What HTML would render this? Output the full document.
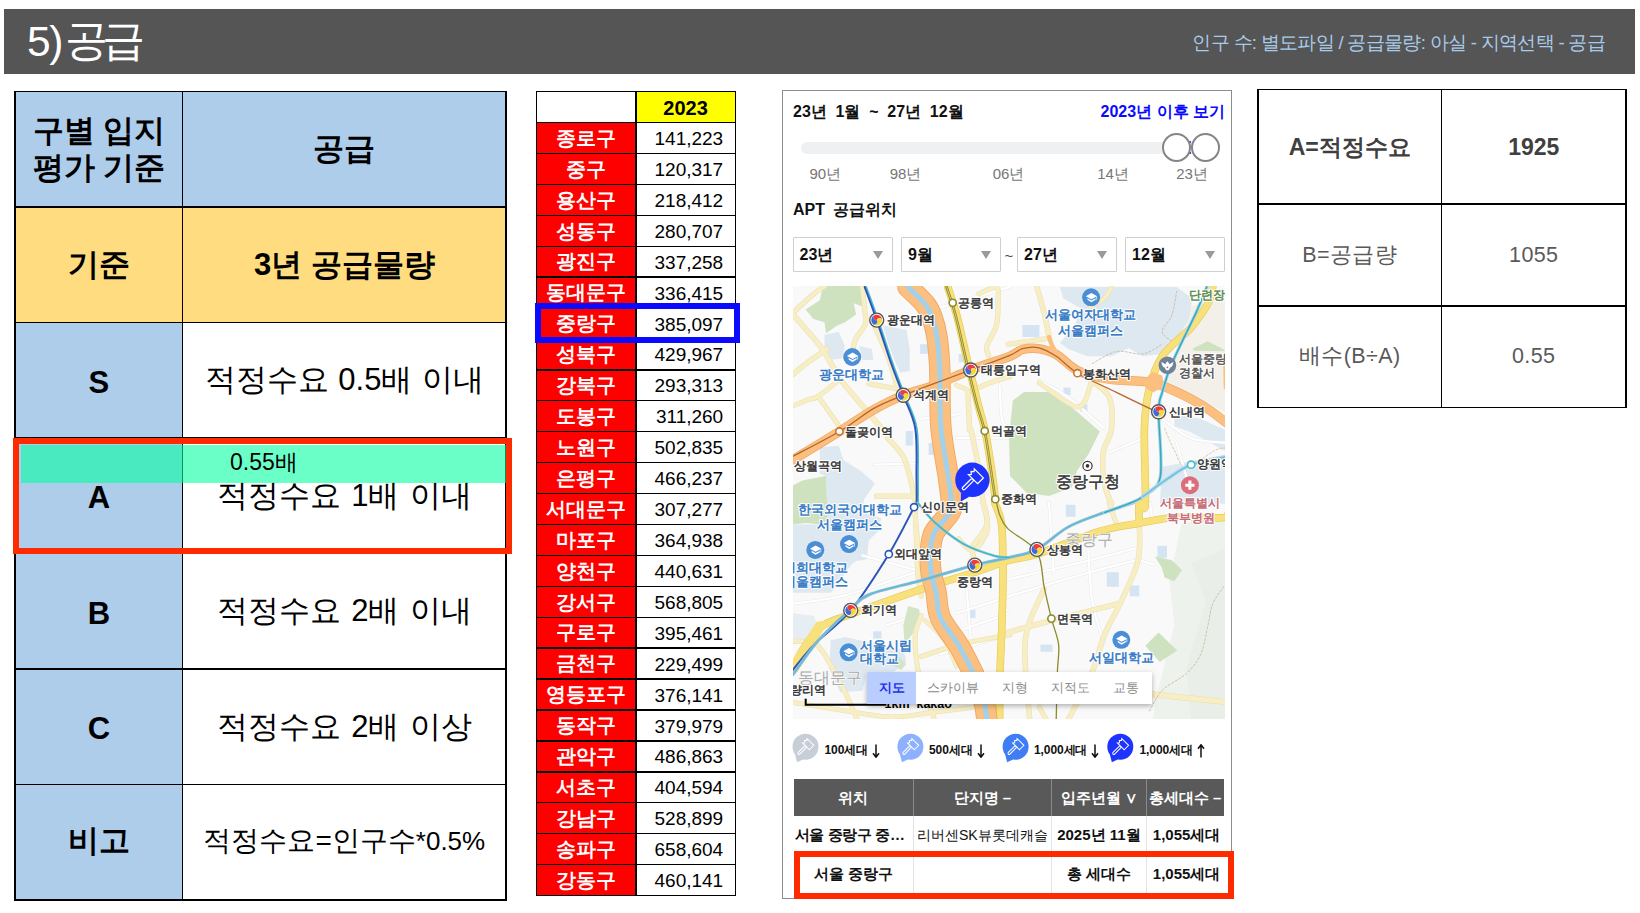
<!DOCTYPE html>
<html lang="ko">
<head>
<meta charset="utf-8">
<title>5) 공급</title>
<style>
html,body{margin:0;padding:0;background:#fff;}
body{width:1640px;height:913px;position:relative;overflow:hidden;font-family:"Liberation Sans",sans-serif;color:#000;}
.abs{position:absolute;}
.c{position:absolute;display:flex;align-items:center;justify-content:center;text-align:center;white-space:nowrap;line-height:1.15;}
.ln{position:absolute;background:#000;}
/* header */
#hdr{left:4px;top:8.5px;width:1631px;height:65.5px;background:#555555;}
#ttl{left:27px;top:8px;height:66px;color:#fff;font-size:41px;justify-content:flex-start;}
#note{right:35px;top:9.5px;height:66px;color:#a9cbea;font-size:18.5px;letter-spacing:-0.68px;justify-content:flex-end;}
/* left table */
.lt-b{font-weight:bold;font-size:31px;}
.lt-r{font-size:31px;font-weight:normal;word-spacing:2px;}
.lt-s{font-size:28px;font-weight:normal;}
.lt-l{font-weight:bold;font-size:31px;padding-top:4px;box-sizing:border-box;}
/* middle table */
.mt-n{color:#fff;font-weight:bold;font-size:19.5px;}
.mt-v{font-size:19px;justify-content:flex-end;padding-top:2px;box-sizing:border-box;}
.mt-y{font-weight:bold;font-size:20px;padding-top:3px;box-sizing:border-box;}
/* right table */
.rt-b{font-weight:bold;font-size:23px;color:#404040;}
.rt-r{font-size:21.5px;color:#595959;letter-spacing:0.4px;}

#pn{left:781.5px;top:90px;width:450.5px;height:809px;box-sizing:border-box;border:1.5px solid #8c8c8c;background:#fff;}
.pb{font-weight:bold;font-size:16px;color:#111;}
.yr{font-size:15px;color:#767676;}
.dd{position:absolute;top:237px;width:100px;height:35px;box-sizing:border-box;border:1px solid #cfcfcf;background:#fff;border-radius:1px;}
.dd span{position:absolute;left:6px;top:0;line-height:33px;font-weight:bold;font-size:16px;color:#111;white-space:nowrap;}
.dd i{position:absolute;right:9px;top:13px;width:0;height:0;border-left:5.5px solid transparent;border-right:5.5px solid transparent;border-top:8.5px solid #9a9a9a;}
.knob{position:absolute;top:132.5px;width:29px;height:29px;box-sizing:border-box;border:2.2px solid #858585;border-radius:50%;background:#fff;}
.lg{font-weight:bold;font-size:12px;color:#111;letter-spacing:-0.1px;}
.th{background:#595959;color:#fff;font-weight:bold;font-size:15px;}
.td{font-weight:bold;font-size:15px;color:#111;}
.vs{position:absolute;width:1px;background:#e4e4e4;}
</style>
</head>
<body>
<div id="hdr" class="abs"></div>
<div id="ttl" class="c"><span style="font-size:42.5px;position:relative;top:1px;letter-spacing:-1.5px">5)</span><span style="font-size:43px;margin-left:3.5px;letter-spacing:-6.5px;position:relative;top:0px">공급</span></div>
<div id="note" class="c">인구 수: 별도파일 / 공급물량: 아실 - 지역선택 - 공급</div>
<div class="c lt-b" style="left:15px;top:91.5px;width:167.7px;height:115.5px;background:#aecdeb;line-height:37px;">구별 입지<br>평가 기준</div>
<div class="c lt-b" style="left:182.7px;top:91.5px;width:323.3px;height:115.5px;background:#aecdeb;">공급</div>
<div class="c lt-b" style="left:15px;top:207px;width:167.7px;height:115.5px;background:#fedc7f;line-height:37px;">기준</div>
<div class="c lt-b" style="left:182.7px;top:207px;width:323.3px;height:115.5px;background:#fedc7f;">3년 공급물량</div>
<div class="c lt-l" style="left:15px;top:322.5px;width:167.7px;height:115.5px;background:#aecdeb;line-height:37px;">S</div>
<div class="c lt-r" style="left:182.7px;top:322.5px;width:323.3px;height:115.5px;background:#ffffff;"><span style="word-spacing:1px">적정수요 0.5배 이내</span></div>
<div class="c lt-l" style="left:15px;top:438px;width:167.7px;height:115.5px;background:#aecdeb;line-height:37px;">A</div>
<div class="c lt-r" style="left:182.7px;top:438px;width:323.3px;height:115.5px;background:#ffffff;">적정수요 1배 이내</div>
<div class="c lt-l" style="left:15px;top:553.5px;width:167.7px;height:115.5px;background:#aecdeb;line-height:37px;">B</div>
<div class="c lt-r" style="left:182.7px;top:553.5px;width:323.3px;height:115.5px;background:#ffffff;">적정수요 2배 이내</div>
<div class="c lt-l" style="left:15px;top:669px;width:167.7px;height:115.5px;background:#aecdeb;line-height:37px;">C</div>
<div class="c lt-r" style="left:182.7px;top:669px;width:323.3px;height:115.5px;background:#ffffff;">적정수요 2배 이상</div>
<div class="c lt-b" style="left:15px;top:784.5px;width:167.7px;height:115.5px;background:#aecdeb;line-height:37px;"><span style="position:relative;top:-1.5px">비고</span></div>
<div class="c lt-s" style="left:182.7px;top:784.5px;width:323.3px;height:115.5px;background:#ffffff;"><span style="position:relative;top:-1.5px">적정수요=인구수<span style="font-size:26px">*0.5%</span></span></div>
<div class="ln" style="left:14.2px;top:90.7px;width:492.6px;height:1.6px;"></div>
<div class="ln" style="left:14.2px;top:206.2px;width:492.6px;height:1.6px;"></div>
<div class="ln" style="left:14.2px;top:321.7px;width:492.6px;height:1.6px;"></div>
<div class="ln" style="left:14.2px;top:437.2px;width:492.6px;height:1.6px;"></div>
<div class="ln" style="left:14.2px;top:552.7px;width:492.6px;height:1.6px;"></div>
<div class="ln" style="left:14.2px;top:668.2px;width:492.6px;height:1.6px;"></div>
<div class="ln" style="left:14.2px;top:783.7px;width:492.6px;height:1.6px;"></div>
<div class="ln" style="left:14.2px;top:899.2px;width:492.6px;height:1.6px;"></div>
<div class="ln" style="left:14.2px;top:90.7px;width:1.6px;height:810.1px;"></div>
<div class="ln" style="left:181.89999999999998px;top:90.7px;width:1.6px;height:810.1px;"></div>
<div class="ln" style="left:505.2px;top:90.7px;width:1.6px;height:810.1px;"></div>
<div class="abs" style="left:20.5px;top:444.5px;width:485px;height:38px;background:rgba(0,255,160,0.58);"></div>
<div class="c" style="left:230px;top:444.5px;height:36px;font-size:23px;justify-content:flex-start;">0.55배</div>
<div class="abs" style="left:12.5px;top:437.5px;width:499px;height:116px;box-sizing:border-box;border:6.5px solid #ff2a00;"></div>
<div class="abs" style="left:536.2px;top:122.52px;width:99.69999999999993px;height:773.0px;background:#ff0000;"></div>
<div class="abs" style="left:635.9px;top:91.6px;width:99.30000000000007px;height:30.92px;background:#ffff00;"></div>
<div class="c mt-y" style="left:635.9px;top:91.6px;width:99.30000000000007px;height:30.92px;">2023</div>
<div class="c mt-n" style="left:536.2px;top:122.52px;width:99.69999999999993px;height:30.92px;">종로구</div>
<div class="c mt-v" style="left:635.9px;top:122.52px;width:87.30000000000007px;height:30.92px;">141,223</div>
<div class="c mt-n" style="left:536.2px;top:153.44px;width:99.69999999999993px;height:30.92px;">중구</div>
<div class="c mt-v" style="left:635.9px;top:153.44px;width:87.30000000000007px;height:30.92px;">120,317</div>
<div class="c mt-n" style="left:536.2px;top:184.36px;width:99.69999999999993px;height:30.92px;">용산구</div>
<div class="c mt-v" style="left:635.9px;top:184.36px;width:87.30000000000007px;height:30.92px;">218,412</div>
<div class="c mt-n" style="left:536.2px;top:215.28px;width:99.69999999999993px;height:30.92px;">성동구</div>
<div class="c mt-v" style="left:635.9px;top:215.28px;width:87.30000000000007px;height:30.92px;">280,707</div>
<div class="c mt-n" style="left:536.2px;top:246.20px;width:99.69999999999993px;height:30.92px;">광진구</div>
<div class="c mt-v" style="left:635.9px;top:246.20px;width:87.30000000000007px;height:30.92px;">337,258</div>
<div class="c mt-n" style="left:536.2px;top:277.12px;width:99.69999999999993px;height:30.92px;">동대문구</div>
<div class="c mt-v" style="left:635.9px;top:277.12px;width:87.30000000000007px;height:30.92px;">336,415</div>
<div class="c mt-n" style="left:536.2px;top:308.04px;width:99.69999999999993px;height:30.92px;">중랑구</div>
<div class="c mt-v" style="left:635.9px;top:308.04px;width:87.30000000000007px;height:30.92px;">385,097</div>
<div class="c mt-n" style="left:536.2px;top:338.96px;width:99.69999999999993px;height:30.92px;">성북구</div>
<div class="c mt-v" style="left:635.9px;top:338.96px;width:87.30000000000007px;height:30.92px;">429,967</div>
<div class="c mt-n" style="left:536.2px;top:369.88px;width:99.69999999999993px;height:30.92px;">강북구</div>
<div class="c mt-v" style="left:635.9px;top:369.88px;width:87.30000000000007px;height:30.92px;">293,313</div>
<div class="c mt-n" style="left:536.2px;top:400.80px;width:99.69999999999993px;height:30.92px;">도봉구</div>
<div class="c mt-v" style="left:635.9px;top:400.80px;width:87.30000000000007px;height:30.92px;">311,260</div>
<div class="c mt-n" style="left:536.2px;top:431.72px;width:99.69999999999993px;height:30.92px;">노원구</div>
<div class="c mt-v" style="left:635.9px;top:431.72px;width:87.30000000000007px;height:30.92px;">502,835</div>
<div class="c mt-n" style="left:536.2px;top:462.64px;width:99.69999999999993px;height:30.92px;">은평구</div>
<div class="c mt-v" style="left:635.9px;top:462.64px;width:87.30000000000007px;height:30.92px;">466,237</div>
<div class="c mt-n" style="left:536.2px;top:493.56px;width:99.69999999999993px;height:30.92px;">서대문구</div>
<div class="c mt-v" style="left:635.9px;top:493.56px;width:87.30000000000007px;height:30.92px;">307,277</div>
<div class="c mt-n" style="left:536.2px;top:524.48px;width:99.69999999999993px;height:30.92px;">마포구</div>
<div class="c mt-v" style="left:635.9px;top:524.48px;width:87.30000000000007px;height:30.92px;">364,938</div>
<div class="c mt-n" style="left:536.2px;top:555.40px;width:99.69999999999993px;height:30.92px;">양천구</div>
<div class="c mt-v" style="left:635.9px;top:555.40px;width:87.30000000000007px;height:30.92px;">440,631</div>
<div class="c mt-n" style="left:536.2px;top:586.32px;width:99.69999999999993px;height:30.92px;">강서구</div>
<div class="c mt-v" style="left:635.9px;top:586.32px;width:87.30000000000007px;height:30.92px;">568,805</div>
<div class="c mt-n" style="left:536.2px;top:617.24px;width:99.69999999999993px;height:30.92px;">구로구</div>
<div class="c mt-v" style="left:635.9px;top:617.24px;width:87.30000000000007px;height:30.92px;">395,461</div>
<div class="c mt-n" style="left:536.2px;top:648.16px;width:99.69999999999993px;height:30.92px;">금천구</div>
<div class="c mt-v" style="left:635.9px;top:648.16px;width:87.30000000000007px;height:30.92px;">229,499</div>
<div class="c mt-n" style="left:536.2px;top:679.08px;width:99.69999999999993px;height:30.92px;">영등포구</div>
<div class="c mt-v" style="left:635.9px;top:679.08px;width:87.30000000000007px;height:30.92px;">376,141</div>
<div class="c mt-n" style="left:536.2px;top:710.00px;width:99.69999999999993px;height:30.92px;">동작구</div>
<div class="c mt-v" style="left:635.9px;top:710.00px;width:87.30000000000007px;height:30.92px;">379,979</div>
<div class="c mt-n" style="left:536.2px;top:740.92px;width:99.69999999999993px;height:30.92px;">관악구</div>
<div class="c mt-v" style="left:635.9px;top:740.92px;width:87.30000000000007px;height:30.92px;">486,863</div>
<div class="c mt-n" style="left:536.2px;top:771.84px;width:99.69999999999993px;height:30.92px;">서초구</div>
<div class="c mt-v" style="left:635.9px;top:771.84px;width:87.30000000000007px;height:30.92px;">404,594</div>
<div class="c mt-n" style="left:536.2px;top:802.76px;width:99.69999999999993px;height:30.92px;">강남구</div>
<div class="c mt-v" style="left:635.9px;top:802.76px;width:87.30000000000007px;height:30.92px;">528,899</div>
<div class="c mt-n" style="left:536.2px;top:833.68px;width:99.69999999999993px;height:30.92px;">송파구</div>
<div class="c mt-v" style="left:635.9px;top:833.68px;width:87.30000000000007px;height:30.92px;">658,604</div>
<div class="c mt-n" style="left:536.2px;top:864.60px;width:99.69999999999993px;height:30.92px;">강동구</div>
<div class="c mt-v" style="left:635.9px;top:864.60px;width:87.30000000000007px;height:30.92px;">460,141</div>
<div class="ln" style="left:535.5px;top:90.90px;width:200.4px;height:1.4px;"></div>
<div class="ln" style="left:535.5px;top:121.82px;width:200.4px;height:1.4px;"></div>
<div class="ln" style="left:535.5px;top:152.74px;width:200.4px;height:1.4px;"></div>
<div class="ln" style="left:535.5px;top:183.66px;width:200.4px;height:1.4px;"></div>
<div class="ln" style="left:535.5px;top:214.58px;width:200.4px;height:1.4px;"></div>
<div class="ln" style="left:535.5px;top:245.50px;width:200.4px;height:1.4px;"></div>
<div class="ln" style="left:535.5px;top:276.42px;width:200.4px;height:1.4px;"></div>
<div class="ln" style="left:535.5px;top:307.34px;width:200.4px;height:1.4px;"></div>
<div class="ln" style="left:535.5px;top:338.26px;width:200.4px;height:1.4px;"></div>
<div class="ln" style="left:535.5px;top:369.18px;width:200.4px;height:1.4px;"></div>
<div class="ln" style="left:535.5px;top:400.10px;width:200.4px;height:1.4px;"></div>
<div class="ln" style="left:535.5px;top:431.02px;width:200.4px;height:1.4px;"></div>
<div class="ln" style="left:535.5px;top:461.94px;width:200.4px;height:1.4px;"></div>
<div class="ln" style="left:535.5px;top:492.86px;width:200.4px;height:1.4px;"></div>
<div class="ln" style="left:535.5px;top:523.78px;width:200.4px;height:1.4px;"></div>
<div class="ln" style="left:535.5px;top:554.70px;width:200.4px;height:1.4px;"></div>
<div class="ln" style="left:535.5px;top:585.62px;width:200.4px;height:1.4px;"></div>
<div class="ln" style="left:535.5px;top:616.54px;width:200.4px;height:1.4px;"></div>
<div class="ln" style="left:535.5px;top:647.46px;width:200.4px;height:1.4px;"></div>
<div class="ln" style="left:535.5px;top:678.38px;width:200.4px;height:1.4px;"></div>
<div class="ln" style="left:535.5px;top:709.30px;width:200.4px;height:1.4px;"></div>
<div class="ln" style="left:535.5px;top:740.22px;width:200.4px;height:1.4px;"></div>
<div class="ln" style="left:535.5px;top:771.14px;width:200.4px;height:1.4px;"></div>
<div class="ln" style="left:535.5px;top:802.06px;width:200.4px;height:1.4px;"></div>
<div class="ln" style="left:535.5px;top:832.98px;width:200.4px;height:1.4px;"></div>
<div class="ln" style="left:535.5px;top:863.90px;width:200.4px;height:1.4px;"></div>
<div class="ln" style="left:535.5px;top:894.82px;width:200.4px;height:1.4px;"></div>
<div class="ln" style="left:535.5px;top:90.89999999999999px;width:1.4px;height:805.32px;"></div>
<div class="ln" style="left:635.1999999999999px;top:90.89999999999999px;width:1.4px;height:805.32px;"></div>
<div class="ln" style="left:734.5px;top:90.89999999999999px;width:1.4px;height:805.32px;"></div>
<div class="abs" style="left:535.3px;top:303.2px;width:204.7px;height:39.8px;box-sizing:border-box;border:6px solid #0a0aff;"></div>
<div class="c rt-b" style="left:1258px;top:89.5px;width:183.5px;height:114.5px;">A=적정수요</div>
<div class="c rt-b" style="left:1441.5px;top:89.5px;width:184.5px;height:114.5px;">1925</div>
<div class="c rt-r" style="left:1258px;top:204px;width:183.5px;height:102px;">B=공급량</div>
<div class="c rt-r" style="left:1441.5px;top:204px;width:184.5px;height:102px;">1055</div>
<div class="c rt-r" style="left:1258px;top:306px;width:183.5px;height:101.5px;">배수(B÷A)</div>
<div class="c rt-r" style="left:1441.5px;top:306px;width:184.5px;height:101.5px;">0.55</div>
<div class="ln" style="left:1257.2px;top:88.7px;width:369.6px;height:1.6px;"></div>
<div class="ln" style="left:1257.2px;top:203.2px;width:369.6px;height:1.6px;"></div>
<div class="ln" style="left:1257.2px;top:305.2px;width:369.6px;height:1.6px;"></div>
<div class="ln" style="left:1257.2px;top:406.7px;width:369.6px;height:1.6px;"></div>
<div class="ln" style="left:1257.2px;top:88.7px;width:1.6px;height:319.6px;"></div>
<div class="ln" style="left:1440.7px;top:88.7px;width:1.6px;height:319.6px;"></div>
<div class="ln" style="left:1625.2px;top:88.7px;width:1.6px;height:319.6px;"></div>
<div id="pn" class="abs"></div>
<div class="c pb" style="left:793px;top:100px;height:24px;justify-content:flex-start;word-spacing:4.3px;">23년 1월 ~ 27년 12월</div>
<div class="c pb" style="right:415px;top:100px;height:24px;justify-content:flex-end;color:#0a0aff;">2023년 이후 보기</div>
<div class="abs" style="left:801px;top:141.5px;width:400px;height:12px;border-radius:6px;background:#eef0f2;"></div>
<div class="abs" style="left:1189.2px;top:141.3px;width:2.2px;height:2.2px;background:#2a50ff;"></div><div class="abs" style="left:1189.2px;top:151.6px;width:2.2px;height:2.2px;background:#2a50ff;"></div>
<div class="knob" style="left:1161.5px;"></div><div class="knob" style="left:1190.5px;"></div>
<div class="c yr" style="left:795.3px;top:162.3px;width:60px;height:22px;">90년</div>
<div class="c yr" style="left:875.5px;top:162.3px;width:60px;height:22px;">98년</div>
<div class="c yr" style="left:978.5px;top:162.3px;width:60px;height:22px;">06년</div>
<div class="c yr" style="left:1083px;top:162.3px;width:60px;height:22px;">14년</div>
<div class="c yr" style="left:1162px;top:162.3px;width:60px;height:22px;">23년</div>
<div class="c pb" style="left:793px;top:198px;height:24px;justify-content:flex-start;word-spacing:3.8px;">APT 공급위치</div>
<div class="dd" style="left:792.5px;"><span>23년</span><i></i></div>
<div class="dd" style="left:901px;"><span>9월</span><i></i></div>
<div class="dd" style="left:1017px;"><span>27년</span><i></i></div>
<div class="dd" style="left:1125px;"><span>12월</span><i></i></div>
<div class="c" style="left:1001px;top:246px;width:16px;height:20px;font-size:15px;color:#444;">~</div>
<svg class="abs" id="map" style="left:793px;top:286px;" width="432" height="433" viewBox="793 286 432 433" font-family="&quot;Liberation Sans&quot;, sans-serif">
<rect x="793" y="286" width="432" height="433" fill="#f9f9f9"/>
<polygon points="1181.5,308.1 1227.8,298.5 1227.8,414.1 1200.8,399.7 1167.0,385.2 1174.3,356.3 1191.1,332.2" fill="#f3f0ea" />
<polygon points="1181.5,524.1 1227.8,514.5 1227.8,719.8 1152.6,719.8 1157.4,692.8 1174.3,625.3 1169.4,579.5" fill="#edf2ec" />
<polygon points="1191.1,562.7 1227.8,548.2 1227.8,719.8 1191.1,719.8 1186.3,668.7 1205.6,601.2" fill="#e9efe8" />
<polygon points="1059.8,286.9 1176.7,286.9 1192.3,298.5 1188.7,320.1 1176.7,339.4 1162.2,353.9 1142.9,356.3 1128.5,347.9 1111.6,356.3 1087.5,356.3 1068.2,349.1 1059.8,343.0 1075.5,325.0 1080.3,308.1 1063.4,298.5" fill="#dde8f1" />
<polygon points="882.9,325.4 906.5,330.1 909.7,349.1 909.7,371.1 900.2,372.7 893.9,358.5 887.6,341.2" fill="#dde8f1" />
<polygon points="824.5,334.9 838.7,331.7 845.0,345.9 841.9,358.5 827.7,360.1 824.5,349.1" fill="#dde8f1" />
<polygon points="859.2,345.9 871.8,349.1 873.4,360.1 862.4,360.1" fill="#dde8f1" />
<polygon points="819.8,447.3 838.7,445.8 843.4,460.0 860.8,471.0 875.0,483.6 863.9,499.4 862.4,512.0 881.3,518.3 878.1,530.9 868.7,540.4 867.1,559.3 856.1,560.9 837.1,573.8 793.0,573.8 793.0,524.6 818.2,524.6 827.7,518.3 826.1,475.7 819.8,474.1" fill="#dde8f1" />
<polygon points="792.9,555.4 852.7,555.4 852.7,562.7 831.0,592.8 792.9,592.8" fill="#dde8f1" />
<polygon points="830.8,640.2 845.0,637.1 859.2,640.2 903.4,649.7 906.5,662.3 893.9,671.7 867.1,671.7 862.4,690.7 840.3,692.2 829.3,668.6" fill="#dde8f1" />
<polygon points="792.9,613.3 814.1,615.7 818.9,634.9 792.9,644.6" fill="#e6edf3" />
<polygon points="1174.3,414.1 1200.8,418.9 1227.8,431.0 1227.8,452.7 1212.8,444.2 1191.1,432.2 1174.3,426.2" fill="#dde8f1" />
<polygon points="1162.2,467.1 1196.0,459.9 1227.8,457.5 1227.8,503.8 1159.8,503.8" fill="#dde8f1" />
<rect x="920.1" y="344.2" width="8.4" height="9.6" fill="#d5e4f2"/>
<rect x="905.7" y="431.0" width="7.2" height="14.5" fill="#d5e4f2"/>
<rect x="928.6" y="443.0" width="8.4" height="12.0" fill="#d5e4f2"/>
<rect x="958.7" y="353.9" width="7.2" height="8.4" fill="#d5e4f2"/>
<rect x="1106.8" y="572.3" width="12.0" height="14.5" fill="#d5e4f2"/>
<rect x="1129.7" y="585.5" width="9.6" height="10.8" fill="#d5e4f2"/>
<rect x="1040.5" y="644.6" width="12.0" height="7.2" fill="#d5e4f2"/>
<rect x="1065.8" y="504.8" width="9.6" height="12.0" fill="#d5e4f2"/>
<rect x="1157.4" y="545.8" width="9.6" height="12.0" fill="#d5e4f2"/>
<rect x="968.3" y="609.6" width="7.2" height="8.4" fill="#d5e4f2"/>
<rect x="973.1" y="697.6" width="9.6" height="9.6" fill="#d5e4f2"/>
<rect x="1022.5" y="325.0" width="16.9" height="12.0" fill="#d5e4f2"/>
<rect x="1063.4" y="387.6" width="7.2" height="7.2" fill="#d5e4f2"/>
<rect x="1080.3" y="404.5" width="7.2" height="7.2" fill="#d5e4f2"/>
<rect x="873.1" y="631.3" width="8.4" height="7.2" fill="#d5e4f2"/>
<path d="M937.5,308.1 C941.0,307.1 946.6,305.6 958.7,302.1 C970.7,298.5 1001.2,289.4 1009.8,286.9" fill="none" stroke="#e9e9e9" stroke-width="3.2" stroke-linecap="round" stroke-linejoin="round" />
<path d="M920.1,418.9 L958.7,414.1" fill="none" stroke="#e9e9e9" stroke-width="3.2" stroke-linecap="round" stroke-linejoin="round" />
<path d="M874.3,464.7 L915.3,463.5" fill="none" stroke="#e9e9e9" stroke-width="3.2" stroke-linecap="round" stroke-linejoin="round" />
<path d="M956.3,438.2 L1009.8,438.2" fill="none" stroke="#e9e9e9" stroke-width="3.2" stroke-linecap="round" stroke-linejoin="round" />
<path d="M999.6,385.2 C1000.0,390.8 1000.4,411.7 1002.0,418.9 C1003.7,426.2 1008.5,427.0 1009.8,428.6" fill="none" stroke="#e9e9e9" stroke-width="3.2" stroke-linecap="round" stroke-linejoin="round" />
<path d="M1039.3,380.4 C1044.1,383.2 1057.4,389.2 1068.2,397.3 C1079.1,405.3 1098.4,423.4 1104.4,428.6" fill="none" stroke="#e9e9e9" stroke-width="3.2" stroke-linecap="round" stroke-linejoin="round" />
<path d="M1109.2,452.7 L1142.9,438.2" fill="none" stroke="#e9e9e9" stroke-width="3.2" stroke-linecap="round" stroke-linejoin="round" />
<path d="M1162.2,418.9 C1167.0,422.2 1180.2,434.2 1191.1,438.2 C1202.1,442.2 1221.7,442.2 1227.8,443.0" fill="none" stroke="#e9e9e9" stroke-width="3.2" stroke-linecap="round" stroke-linejoin="round" />
<path d="M1176.7,443.0 L1186.3,476.8" fill="none" stroke="#e9e9e9" stroke-width="3.2" stroke-linecap="round" stroke-linejoin="round" />
<path d="M792.9,603.6 C801.6,602.2 825.0,600.4 845.4,595.2 C865.8,590.0 903.7,576.1 915.3,572.3" fill="none" stroke="#e9e9e9" stroke-width="3.2" stroke-linecap="round" stroke-linejoin="round" />
<path d="M862.3,555.4 L915.3,569.9" fill="none" stroke="#e9e9e9" stroke-width="3.2" stroke-linecap="round" stroke-linejoin="round" />
<path d="M886.4,625.3 L915.3,615.7" fill="none" stroke="#e9e9e9" stroke-width="3.2" stroke-linecap="round" stroke-linejoin="round" />
<path d="M956.3,613.3 L1009.8,596.4" fill="none" stroke="#e9e9e9" stroke-width="3.2" stroke-linecap="round" stroke-linejoin="round" />
<path d="M946.6,634.9 L1009.8,613.3" fill="none" stroke="#e9e9e9" stroke-width="3.2" stroke-linecap="round" stroke-linejoin="round" />
<path d="M939.4,654.2 L1009.8,634.9" fill="none" stroke="#e9e9e9" stroke-width="3.2" stroke-linecap="round" stroke-linejoin="round" />
<path d="M965.9,579.5 L973.1,668.7" fill="none" stroke="#e9e9e9" stroke-width="3.2" stroke-linecap="round" stroke-linejoin="round" />
<path d="M1008.0,579.5 C1021.7,576.3 1068.6,565.5 1089.9,560.2 C1111.2,555.0 1128.1,550.2 1135.7,548.2" fill="none" stroke="#e9e9e9" stroke-width="3.2" stroke-linecap="round" stroke-linejoin="round" />
<path d="M1008.0,596.4 C1021.7,592.4 1068.6,578.3 1089.9,572.3 C1111.2,566.3 1128.1,562.2 1135.7,560.2" fill="none" stroke="#e9e9e9" stroke-width="3.2" stroke-linecap="round" stroke-linejoin="round" />
<path d="M1087.5,536.1 C1088.3,547.0 1089.5,583.1 1092.3,601.2 C1095.1,619.3 1102.4,637.3 1104.4,644.6" fill="none" stroke="#e9e9e9" stroke-width="3.2" stroke-linecap="round" stroke-linejoin="round" />
<path d="M1049.0,502.9 L1053.8,572.3" fill="none" stroke="#e9e9e9" stroke-width="3.2" stroke-linecap="round" stroke-linejoin="round" />
<path d="M1139.3,560.2 L1153.8,564.6" fill="none" stroke="#e9e9e9" stroke-width="3.2" stroke-linecap="round" stroke-linejoin="round" />
<path d="M1150.2,502.9 L1152.6,521.7" fill="none" stroke="#e9e9e9" stroke-width="3.2" stroke-linecap="round" stroke-linejoin="round" />
<path d="M937.5,308.1 C941.0,307.1 946.6,305.6 958.7,302.1 C970.7,298.5 1001.2,289.4 1009.8,286.9" fill="none" stroke="#ffffff" stroke-width="2.2" stroke-linecap="round" stroke-linejoin="round" />
<path d="M920.1,418.9 L958.7,414.1" fill="none" stroke="#ffffff" stroke-width="2.2" stroke-linecap="round" stroke-linejoin="round" />
<path d="M874.3,464.7 L915.3,463.5" fill="none" stroke="#ffffff" stroke-width="2.2" stroke-linecap="round" stroke-linejoin="round" />
<path d="M956.3,438.2 L1009.8,438.2" fill="none" stroke="#ffffff" stroke-width="2.2" stroke-linecap="round" stroke-linejoin="round" />
<path d="M999.6,385.2 C1000.0,390.8 1000.4,411.7 1002.0,418.9 C1003.7,426.2 1008.5,427.0 1009.8,428.6" fill="none" stroke="#ffffff" stroke-width="2.2" stroke-linecap="round" stroke-linejoin="round" />
<path d="M1039.3,380.4 C1044.1,383.2 1057.4,389.2 1068.2,397.3 C1079.1,405.3 1098.4,423.4 1104.4,428.6" fill="none" stroke="#ffffff" stroke-width="2.2" stroke-linecap="round" stroke-linejoin="round" />
<path d="M1109.2,452.7 L1142.9,438.2" fill="none" stroke="#ffffff" stroke-width="2.2" stroke-linecap="round" stroke-linejoin="round" />
<path d="M1162.2,418.9 C1167.0,422.2 1180.2,434.2 1191.1,438.2 C1202.1,442.2 1221.7,442.2 1227.8,443.0" fill="none" stroke="#ffffff" stroke-width="2.2" stroke-linecap="round" stroke-linejoin="round" />
<path d="M1176.7,443.0 L1186.3,476.8" fill="none" stroke="#ffffff" stroke-width="2.2" stroke-linecap="round" stroke-linejoin="round" />
<path d="M792.9,603.6 C801.6,602.2 825.0,600.4 845.4,595.2 C865.8,590.0 903.7,576.1 915.3,572.3" fill="none" stroke="#ffffff" stroke-width="2.2" stroke-linecap="round" stroke-linejoin="round" />
<path d="M862.3,555.4 L915.3,569.9" fill="none" stroke="#ffffff" stroke-width="2.2" stroke-linecap="round" stroke-linejoin="round" />
<path d="M886.4,625.3 L915.3,615.7" fill="none" stroke="#ffffff" stroke-width="2.2" stroke-linecap="round" stroke-linejoin="round" />
<path d="M956.3,613.3 L1009.8,596.4" fill="none" stroke="#ffffff" stroke-width="2.2" stroke-linecap="round" stroke-linejoin="round" />
<path d="M946.6,634.9 L1009.8,613.3" fill="none" stroke="#ffffff" stroke-width="2.2" stroke-linecap="round" stroke-linejoin="round" />
<path d="M939.4,654.2 L1009.8,634.9" fill="none" stroke="#ffffff" stroke-width="2.2" stroke-linecap="round" stroke-linejoin="round" />
<path d="M965.9,579.5 L973.1,668.7" fill="none" stroke="#ffffff" stroke-width="2.2" stroke-linecap="round" stroke-linejoin="round" />
<path d="M1008.0,579.5 C1021.7,576.3 1068.6,565.5 1089.9,560.2 C1111.2,555.0 1128.1,550.2 1135.7,548.2" fill="none" stroke="#ffffff" stroke-width="2.2" stroke-linecap="round" stroke-linejoin="round" />
<path d="M1008.0,596.4 C1021.7,592.4 1068.6,578.3 1089.9,572.3 C1111.2,566.3 1128.1,562.2 1135.7,560.2" fill="none" stroke="#ffffff" stroke-width="2.2" stroke-linecap="round" stroke-linejoin="round" />
<path d="M1087.5,536.1 C1088.3,547.0 1089.5,583.1 1092.3,601.2 C1095.1,619.3 1102.4,637.3 1104.4,644.6" fill="none" stroke="#ffffff" stroke-width="2.2" stroke-linecap="round" stroke-linejoin="round" />
<path d="M1049.0,502.9 L1053.8,572.3" fill="none" stroke="#ffffff" stroke-width="2.2" stroke-linecap="round" stroke-linejoin="round" />
<path d="M1139.3,560.2 L1153.8,564.6" fill="none" stroke="#ffffff" stroke-width="2.2" stroke-linecap="round" stroke-linejoin="round" />
<path d="M1150.2,502.9 L1152.6,521.7" fill="none" stroke="#ffffff" stroke-width="2.2" stroke-linecap="round" stroke-linejoin="round" />
<polygon points="823.0,286.0 862.4,286.0 862.4,306.5 853.7,303.3 856.1,314.4 845.0,322.3 837.1,325.4 826.1,333.3 824.5,322.3 813.5,319.1 805.6,309.6 819.8,300.2" fill="#cfe2bf" />
<polygon points="793.0,485.2 802.5,480.4 826.1,475.7 827.7,518.3 821.4,524.6 805.6,523.0 793.0,524.6" fill="#cfe2bf" />
<polygon points="1012.8,400.6 1024.0,392.0 1049.0,392.0 1060.5,397.8 1077.0,411.8 1099.8,431.5 1088.6,454.0 1077.0,470.7 1071.7,487.6 1049.0,496.0 1026.8,493.0 1010.0,476.0 1009.0,437.0" fill="#cfe2bf" />
<polygon points="1192.6,348.5 1207.7,341.3 1223.4,349.2 1225.0,351.2 1193.9,350.8" fill="#cfe2bf" />
<polygon points="1155.0,556.6 1171.9,560.2 1182.0,569.9 1174.3,581.2 1164.6,577.6 1161.7,567.5" fill="#cfe2bf" />
<polygon points="1145.3,645.8 1158.6,632.5 1177.2,650.6 1159.8,661.9" fill="#cfe2bf" />
<polygon points="908.1,606.0 918.9,608.9 921.3,620.5 911.7,634.9 904.5,644.6 903.3,625.3" fill="#d3e5c6" />
<polygon points="896.0,654.2 906.1,664.3 901.3,669.9 894.8,666.3" fill="#d3e5c6" />
<path d="M862.4,286.0 C862.8,289.9 864.2,303.3 864.7,309.6 C865.3,316.0 867.0,319.1 865.5,323.8 C864.1,328.6 858.2,333.8 856.1,338.0 C854.0,342.2 853.4,347.2 852.9,349.1" fill="none" stroke="#eadfae" stroke-width="5.2" stroke-linecap="round" stroke-linejoin="round" />
<path d="M875.0,327.0 C877.1,331.7 884.2,346.4 887.6,355.4 C891.0,364.3 893.6,374.7 895.5,380.6 C897.4,386.5 898.4,389.1 898.9,390.8" fill="none" stroke="#eadfae" stroke-width="5.2" stroke-linecap="round" stroke-linejoin="round" />
<path d="M868.7,383.7 L895.5,388.5" fill="none" stroke="#eadfae" stroke-width="5.0" stroke-linecap="round" stroke-linejoin="round" />
<path d="M793.0,314.4 C796.4,318.3 808.2,331.7 813.5,338.0 C818.8,344.3 820.1,345.4 824.5,352.2 C829.0,359.0 834.0,370.1 840.3,379.0 C846.6,387.9 855.5,397.7 862.4,405.8 C869.2,414.0 878.1,424.2 881.3,427.9" fill="none" stroke="#eadfae" stroke-width="5.6" stroke-linecap="round" stroke-linejoin="round" />
<path d="M887.6,437.9 C890.2,441.0 899.4,449.4 903.4,456.8 C907.3,464.2 909.4,474.9 911.2,482.0 C913.1,489.1 913.9,496.5 914.4,499.4" fill="none" stroke="#eadfae" stroke-width="5.4" stroke-linecap="round" stroke-linejoin="round" />
<path d="M914.4,508.8 C914.9,514.1 916.8,529.5 917.5,540.4 C918.3,551.2 918.9,568.2 919.1,573.8" fill="none" stroke="#eadfae" stroke-width="5.0" stroke-linecap="round" stroke-linejoin="round" />
<path d="M876.6,496.2 L912.8,496.2" fill="none" stroke="#eadfae" stroke-width="5.2" stroke-linecap="round" stroke-linejoin="round" />
<path d="M793.0,374.3 C795.6,372.2 803.1,365.9 808.8,361.7 C814.4,357.5 823.9,351.2 826.9,349.1" fill="none" stroke="#eadfae" stroke-width="5.4" stroke-linecap="round" stroke-linejoin="round" />
<path d="M793.0,312.8 C796.2,309.9 806.7,299.9 811.9,295.5 C817.2,291.0 822.4,287.6 824.5,286.0" fill="none" stroke="#eadfae" stroke-width="5.2" stroke-linecap="round" stroke-linejoin="round" />
<path d="M793.0,405.8 C795.6,404.8 804.6,401.1 808.8,399.5 C813.0,397.9 813.0,399.8 818.2,396.4 C823.5,392.9 836.6,381.9 840.3,379.0" fill="none" stroke="#eadfae" stroke-width="5.0" stroke-linecap="round" stroke-linejoin="round" />
<path d="M818.2,396.4 L840.3,427.9" fill="none" stroke="#eadfae" stroke-width="5.0" stroke-linecap="round" stroke-linejoin="round" />
<path d="M968.0,394.8 L969.6,429.8" fill="none" stroke="#eadfae" stroke-width="5.4" stroke-linecap="round" stroke-linejoin="round" />
<path d="M971.1,430.0 C972.2,435.3 975.6,450.5 977.5,461.5 C979.3,472.6 980.6,485.7 982.2,496.2 C983.8,506.7 988.5,516.2 986.9,524.6 C985.3,533.0 974.8,540.9 972.7,546.7 C970.6,552.4 974.0,557.2 974.3,559.3" fill="none" stroke="#eadfae" stroke-width="5.4" stroke-linecap="round" stroke-linejoin="round" />
<path d="M979.0,293.9 C981.9,292.8 993.2,286.3 996.4,287.6 C999.5,288.9 998.0,295.5 998.0,301.8 C998.0,308.1 998.2,318.1 996.4,325.4 C994.5,332.8 988.2,340.9 986.9,345.9 C985.6,350.9 988.2,353.8 988.5,355.4" fill="none" stroke="#eadfae" stroke-width="5.2" stroke-linecap="round" stroke-linejoin="round" />
<path d="M973.1,390.0 C975.9,388.8 983.9,385.0 990.0,382.8 C996.1,380.6 1006.5,377.8 1009.8,376.8" fill="none" stroke="#eadfae" stroke-width="5.0" stroke-linecap="round" stroke-linejoin="round" />
<path d="M956.3,385.2 C958.1,386.0 965.0,388.0 967.1,390.0 C969.2,392.0 968.5,396.0 968.8,397.3" fill="none" stroke="#eadfae" stroke-width="4.5" stroke-linecap="round" stroke-linejoin="round" />
<path d="M1036.9,286.9 C1038.1,291.2 1042.1,304.4 1044.1,312.9 C1046.2,321.5 1048.6,334.0 1049.4,338.2" fill="none" stroke="#eadfae" stroke-width="5.5" stroke-linecap="round" stroke-linejoin="round" />
<path d="M1039.3,382.8 C1045.8,386.8 1069.2,406.9 1077.9,406.9 C1086.5,406.9 1088.9,386.8 1091.1,382.8" fill="none" stroke="#eadfae" stroke-width="5.0" stroke-linecap="round" stroke-linejoin="round" />
<path d="M1091.1,380.4 C1094.1,383.2 1105.8,389.2 1109.2,397.3 C1112.6,405.3 1112.6,419.3 1111.6,428.6 C1110.6,437.8 1104.4,443.4 1103.2,452.7 C1102.0,461.9 1103.0,475.5 1104.4,484.0 C1105.8,492.5 1110.4,500.5 1111.6,503.8" fill="none" stroke="#eadfae" stroke-width="5.5" stroke-linecap="round" stroke-linejoin="round" />
<path d="M1008.0,344.2 C1012.0,343.6 1025.2,341.6 1032.1,340.6 C1039.0,339.6 1046.6,338.6 1049.4,338.2" fill="none" stroke="#eadfae" stroke-width="5.0" stroke-linecap="round" stroke-linejoin="round" />
<path d="M1111.6,286.9 C1110.4,288.8 1108.0,295.1 1104.4,298.5 C1100.8,301.8 1092.3,305.5 1089.9,306.9" fill="none" stroke="#eadfae" stroke-width="4.5" stroke-linecap="round" stroke-linejoin="round" />
<path d="M915.3,509.6 C915.7,520.1 916.7,557.8 917.7,572.3 C918.7,586.7 920.7,592.4 921.3,596.4" fill="none" stroke="#eadfae" stroke-width="5.0" stroke-linecap="round" stroke-linejoin="round" />
<path d="M921.3,615.7 C920.3,618.9 915.9,626.1 915.3,634.9 C914.7,643.8 916.1,659.0 917.7,668.7 C919.3,678.3 922.1,684.3 924.9,692.8 C927.8,701.3 933.0,715.3 934.6,719.8" fill="none" stroke="#eadfae" stroke-width="5.0" stroke-linecap="round" stroke-linejoin="round" />
<path d="M792.9,641.0 C796.8,641.6 809.8,639.8 816.5,644.6 C823.3,649.4 828.6,661.8 833.4,669.9 C838.2,677.9 841.4,684.5 845.4,692.8 C849.4,701.1 855.5,715.3 857.5,719.8" fill="none" stroke="#eadfae" stroke-width="5.0" stroke-linecap="round" stroke-linejoin="round" />
<path d="M792.9,702.4 C800.4,703.6 821.8,707.2 838.2,709.6 C854.6,712.0 875.1,716.5 891.2,716.9 C907.3,717.3 920.9,713.7 934.6,712.0 C948.2,710.4 966.7,708.0 973.1,707.2" fill="none" stroke="#eadfae" stroke-width="5.0" stroke-linecap="round" stroke-linejoin="round" />
<path d="M921.3,656.6 C927.6,654.6 943.9,648.2 958.7,644.6 C973.4,641.0 1001.2,636.5 1009.8,634.9" fill="none" stroke="#eadfae" stroke-width="5.0" stroke-linecap="round" stroke-linejoin="round" />
<path d="M958.7,538.6 C961.1,540.6 968.3,552.2 973.1,550.6 C978.0,549.0 986.0,536.9 987.6,528.9 C989.2,521.0 983.6,507.2 982.8,502.9" fill="none" stroke="#eadfae" stroke-width="5.0" stroke-linecap="round" stroke-linejoin="round" />
<path d="M924.9,620.5 C928.2,623.7 939.0,632.1 944.2,639.8 C949.4,647.4 954.3,661.8 956.3,666.3" fill="none" stroke="#eadfae" stroke-width="4.5" stroke-linecap="round" stroke-linejoin="round" />
<path d="M1139.3,522.9 C1139.1,529.1 1141.1,547.2 1138.1,560.2 C1135.1,573.3 1126.9,588.8 1121.3,601.2 C1115.6,613.7 1109.2,623.2 1104.4,634.9 C1099.6,646.7 1098.4,657.4 1092.3,671.6 C1086.3,685.7 1072.3,711.7 1068.2,719.8" fill="none" stroke="#eadfae" stroke-width="5.5" stroke-linecap="round" stroke-linejoin="round" />
<path d="M1008.0,632.5 C1015.2,630.5 1032.9,625.3 1051.4,620.5 C1069.8,615.7 1107.6,606.4 1118.8,603.6" fill="none" stroke="#eadfae" stroke-width="5.5" stroke-linecap="round" stroke-linejoin="round" />
<path d="M1044.1,589.2 C1041.5,595.2 1031.7,614.1 1028.5,625.3 C1025.3,636.5 1024.7,640.9 1024.9,656.6 C1025.1,672.4 1028.9,709.2 1029.7,719.8" fill="none" stroke="#eadfae" stroke-width="5.5" stroke-linecap="round" stroke-linejoin="round" />
<path d="M1109.2,502.9 L1116.4,524.1" fill="none" stroke="#eadfae" stroke-width="5.0" stroke-linecap="round" stroke-linejoin="round" />
<path d="M1150.2,694.0 L1227.8,702.4" fill="none" stroke="#eadfae" stroke-width="6.0" stroke-linecap="round" stroke-linejoin="round" />
<path d="M1039.3,707.2 L1046.6,719.8" fill="none" stroke="#eadfae" stroke-width="5.0" stroke-linecap="round" stroke-linejoin="round" />
<path d="M862.4,286.0 C862.8,289.9 864.2,303.3 864.7,309.6 C865.3,316.0 867.0,319.1 865.5,323.8 C864.1,328.6 858.2,333.8 856.1,338.0 C854.0,342.2 853.4,347.2 852.9,349.1" fill="none" stroke="#f7eec6" stroke-width="4.2" stroke-linecap="round" stroke-linejoin="round" />
<path d="M875.0,327.0 C877.1,331.7 884.2,346.4 887.6,355.4 C891.0,364.3 893.6,374.7 895.5,380.6 C897.4,386.5 898.4,389.1 898.9,390.8" fill="none" stroke="#f7eec6" stroke-width="4.2" stroke-linecap="round" stroke-linejoin="round" />
<path d="M868.7,383.7 L895.5,388.5" fill="none" stroke="#f7eec6" stroke-width="4" stroke-linecap="round" stroke-linejoin="round" />
<path d="M793.0,314.4 C796.4,318.3 808.2,331.7 813.5,338.0 C818.8,344.3 820.1,345.4 824.5,352.2 C829.0,359.0 834.0,370.1 840.3,379.0 C846.6,387.9 855.5,397.7 862.4,405.8 C869.2,414.0 878.1,424.2 881.3,427.9" fill="none" stroke="#f7eec6" stroke-width="4.6" stroke-linecap="round" stroke-linejoin="round" />
<path d="M887.6,437.9 C890.2,441.0 899.4,449.4 903.4,456.8 C907.3,464.2 909.4,474.9 911.2,482.0 C913.1,489.1 913.9,496.5 914.4,499.4" fill="none" stroke="#f7eec6" stroke-width="4.4" stroke-linecap="round" stroke-linejoin="round" />
<path d="M914.4,508.8 C914.9,514.1 916.8,529.5 917.5,540.4 C918.3,551.2 918.9,568.2 919.1,573.8" fill="none" stroke="#f7eec6" stroke-width="4" stroke-linecap="round" stroke-linejoin="round" />
<path d="M876.6,496.2 L912.8,496.2" fill="none" stroke="#f7eec6" stroke-width="4.2" stroke-linecap="round" stroke-linejoin="round" />
<path d="M793.0,374.3 C795.6,372.2 803.1,365.9 808.8,361.7 C814.4,357.5 823.9,351.2 826.9,349.1" fill="none" stroke="#f7eec6" stroke-width="4.4" stroke-linecap="round" stroke-linejoin="round" />
<path d="M793.0,312.8 C796.2,309.9 806.7,299.9 811.9,295.5 C817.2,291.0 822.4,287.6 824.5,286.0" fill="none" stroke="#f7eec6" stroke-width="4.2" stroke-linecap="round" stroke-linejoin="round" />
<path d="M793.0,405.8 C795.6,404.8 804.6,401.1 808.8,399.5 C813.0,397.9 813.0,399.8 818.2,396.4 C823.5,392.9 836.6,381.9 840.3,379.0" fill="none" stroke="#f7eec6" stroke-width="4" stroke-linecap="round" stroke-linejoin="round" />
<path d="M818.2,396.4 L840.3,427.9" fill="none" stroke="#f7eec6" stroke-width="4" stroke-linecap="round" stroke-linejoin="round" />
<path d="M968.0,394.8 L969.6,429.8" fill="none" stroke="#f7eec6" stroke-width="4.4" stroke-linecap="round" stroke-linejoin="round" />
<path d="M971.1,430.0 C972.2,435.3 975.6,450.5 977.5,461.5 C979.3,472.6 980.6,485.7 982.2,496.2 C983.8,506.7 988.5,516.2 986.9,524.6 C985.3,533.0 974.8,540.9 972.7,546.7 C970.6,552.4 974.0,557.2 974.3,559.3" fill="none" stroke="#f7eec6" stroke-width="4.4" stroke-linecap="round" stroke-linejoin="round" />
<path d="M979.0,293.9 C981.9,292.8 993.2,286.3 996.4,287.6 C999.5,288.9 998.0,295.5 998.0,301.8 C998.0,308.1 998.2,318.1 996.4,325.4 C994.5,332.8 988.2,340.9 986.9,345.9 C985.6,350.9 988.2,353.8 988.5,355.4" fill="none" stroke="#f7eec6" stroke-width="4.2" stroke-linecap="round" stroke-linejoin="round" />
<path d="M973.1,390.0 C975.9,388.8 983.9,385.0 990.0,382.8 C996.1,380.6 1006.5,377.8 1009.8,376.8" fill="none" stroke="#f7eec6" stroke-width="4" stroke-linecap="round" stroke-linejoin="round" />
<path d="M956.3,385.2 C958.1,386.0 965.0,388.0 967.1,390.0 C969.2,392.0 968.5,396.0 968.8,397.3" fill="none" stroke="#f7eec6" stroke-width="3.5" stroke-linecap="round" stroke-linejoin="round" />
<path d="M1036.9,286.9 C1038.1,291.2 1042.1,304.4 1044.1,312.9 C1046.2,321.5 1048.6,334.0 1049.4,338.2" fill="none" stroke="#f7eec6" stroke-width="4.5" stroke-linecap="round" stroke-linejoin="round" />
<path d="M1039.3,382.8 C1045.8,386.8 1069.2,406.9 1077.9,406.9 C1086.5,406.9 1088.9,386.8 1091.1,382.8" fill="none" stroke="#f7eec6" stroke-width="4" stroke-linecap="round" stroke-linejoin="round" />
<path d="M1091.1,380.4 C1094.1,383.2 1105.8,389.2 1109.2,397.3 C1112.6,405.3 1112.6,419.3 1111.6,428.6 C1110.6,437.8 1104.4,443.4 1103.2,452.7 C1102.0,461.9 1103.0,475.5 1104.4,484.0 C1105.8,492.5 1110.4,500.5 1111.6,503.8" fill="none" stroke="#f7eec6" stroke-width="4.5" stroke-linecap="round" stroke-linejoin="round" />
<path d="M1008.0,344.2 C1012.0,343.6 1025.2,341.6 1032.1,340.6 C1039.0,339.6 1046.6,338.6 1049.4,338.2" fill="none" stroke="#f7eec6" stroke-width="4" stroke-linecap="round" stroke-linejoin="round" />
<path d="M1111.6,286.9 C1110.4,288.8 1108.0,295.1 1104.4,298.5 C1100.8,301.8 1092.3,305.5 1089.9,306.9" fill="none" stroke="#f7eec6" stroke-width="3.5" stroke-linecap="round" stroke-linejoin="round" />
<path d="M915.3,509.6 C915.7,520.1 916.7,557.8 917.7,572.3 C918.7,586.7 920.7,592.4 921.3,596.4" fill="none" stroke="#f7eec6" stroke-width="4" stroke-linecap="round" stroke-linejoin="round" />
<path d="M921.3,615.7 C920.3,618.9 915.9,626.1 915.3,634.9 C914.7,643.8 916.1,659.0 917.7,668.7 C919.3,678.3 922.1,684.3 924.9,692.8 C927.8,701.3 933.0,715.3 934.6,719.8" fill="none" stroke="#f7eec6" stroke-width="4" stroke-linecap="round" stroke-linejoin="round" />
<path d="M792.9,641.0 C796.8,641.6 809.8,639.8 816.5,644.6 C823.3,649.4 828.6,661.8 833.4,669.9 C838.2,677.9 841.4,684.5 845.4,692.8 C849.4,701.1 855.5,715.3 857.5,719.8" fill="none" stroke="#f7eec6" stroke-width="4" stroke-linecap="round" stroke-linejoin="round" />
<path d="M792.9,702.4 C800.4,703.6 821.8,707.2 838.2,709.6 C854.6,712.0 875.1,716.5 891.2,716.9 C907.3,717.3 920.9,713.7 934.6,712.0 C948.2,710.4 966.7,708.0 973.1,707.2" fill="none" stroke="#f7eec6" stroke-width="4" stroke-linecap="round" stroke-linejoin="round" />
<path d="M921.3,656.6 C927.6,654.6 943.9,648.2 958.7,644.6 C973.4,641.0 1001.2,636.5 1009.8,634.9" fill="none" stroke="#f7eec6" stroke-width="4" stroke-linecap="round" stroke-linejoin="round" />
<path d="M958.7,538.6 C961.1,540.6 968.3,552.2 973.1,550.6 C978.0,549.0 986.0,536.9 987.6,528.9 C989.2,521.0 983.6,507.2 982.8,502.9" fill="none" stroke="#f7eec6" stroke-width="4" stroke-linecap="round" stroke-linejoin="round" />
<path d="M924.9,620.5 C928.2,623.7 939.0,632.1 944.2,639.8 C949.4,647.4 954.3,661.8 956.3,666.3" fill="none" stroke="#f7eec6" stroke-width="3.5" stroke-linecap="round" stroke-linejoin="round" />
<path d="M1139.3,522.9 C1139.1,529.1 1141.1,547.2 1138.1,560.2 C1135.1,573.3 1126.9,588.8 1121.3,601.2 C1115.6,613.7 1109.2,623.2 1104.4,634.9 C1099.6,646.7 1098.4,657.4 1092.3,671.6 C1086.3,685.7 1072.3,711.7 1068.2,719.8" fill="none" stroke="#f7eec6" stroke-width="4.5" stroke-linecap="round" stroke-linejoin="round" />
<path d="M1008.0,632.5 C1015.2,630.5 1032.9,625.3 1051.4,620.5 C1069.8,615.7 1107.6,606.4 1118.8,603.6" fill="none" stroke="#f7eec6" stroke-width="4.5" stroke-linecap="round" stroke-linejoin="round" />
<path d="M1044.1,589.2 C1041.5,595.2 1031.7,614.1 1028.5,625.3 C1025.3,636.5 1024.7,640.9 1024.9,656.6 C1025.1,672.4 1028.9,709.2 1029.7,719.8" fill="none" stroke="#f7eec6" stroke-width="4.5" stroke-linecap="round" stroke-linejoin="round" />
<path d="M1109.2,502.9 L1116.4,524.1" fill="none" stroke="#f7eec6" stroke-width="4" stroke-linecap="round" stroke-linejoin="round" />
<path d="M1150.2,694.0 L1227.8,702.4" fill="none" stroke="#f7eec6" stroke-width="5" stroke-linecap="round" stroke-linejoin="round" />
<path d="M1039.3,707.2 L1046.6,719.8" fill="none" stroke="#f7eec6" stroke-width="4" stroke-linecap="round" stroke-linejoin="round" />
<path d="M1223.7,586.7 C1221.9,589.6 1215.4,597.2 1212.8,603.6 C1210.2,610.0 1210.0,616.9 1208.0,625.3 C1206.0,633.7 1204.4,646.2 1200.8,654.2 C1197.2,662.2 1192.7,667.5 1186.3,673.5 C1179.9,679.5 1168.4,683.9 1162.2,690.4 C1156.0,696.8 1151.2,708.4 1149.0,712.0" fill="none" stroke="#c9b9a0" stroke-width="0.9" stroke-linecap="round" stroke-linejoin="round" stroke-dasharray="2 2"/>
<path d="M1176.7,291.2 C1175.9,295.2 1174.3,308.5 1171.9,315.3 C1169.4,322.2 1161.4,327.4 1162.2,332.2 C1163.0,337.0 1174.3,342.2 1176.7,344.2" fill="none" stroke="#c9b9a0" stroke-width="0.9" stroke-linecap="round" stroke-linejoin="round" stroke-dasharray="2 2"/>
<path d="M1092.3,363.5 C1096.4,361.5 1108.0,353.1 1116.4,351.5 C1124.9,349.9 1135.3,355.1 1142.9,353.9 C1150.6,352.7 1159.0,345.8 1162.2,344.2" fill="none" stroke="#c9b9a0" stroke-width="0.9" stroke-linecap="round" stroke-linejoin="round" stroke-dasharray="2 2"/>
<path d="M1164.6,428.6 C1166.2,432.2 1170.7,443.8 1174.3,450.3 C1177.9,456.7 1179.5,467.1 1186.3,467.1 C1193.1,467.1 1208.3,453.5 1215.2,450.3 C1222.1,447.1 1225.7,448.3 1227.8,447.9" fill="none" stroke="#d5bfa0" stroke-width="0.9" stroke-linecap="round" stroke-linejoin="round" stroke-dasharray="2 2"/>
<path d="M792.9,668.7 C794.8,665.1 799.7,654.0 804.5,647.0 C809.2,640.0 813.7,631.9 821.3,626.5 C829.0,621.1 833.8,620.6 850.2,614.5 C866.7,608.3 899.6,596.6 920.1,589.6 C940.6,582.7 958.2,577.7 973.1,572.8 C988.1,567.9 999.1,563.3 1009.8,560.2 C1020.4,557.1 1021.9,559.0 1036.9,554.2 C1051.9,549.4 1082.7,536.5 1099.6,531.3 C1116.4,526.2 1125.3,525.7 1138.1,523.4 C1151.0,521.0 1163.0,518.3 1176.7,517.3 C1190.3,516.4 1211.5,518.2 1220.0,517.8 C1228.6,517.4 1226.5,515.4 1227.8,514.9" fill="none" stroke="#e3c85a" stroke-width="7.6" stroke-linecap="round" stroke-linejoin="round" />
<path d="M947.8,287.0 C949.3,291.8 953.6,303.2 957.0,316.0 C960.4,328.8 964.7,349.3 968.2,364.0 C971.7,378.7 975.2,392.8 978.0,404.0 C980.8,415.2 983.0,420.5 985.2,431.0 C987.4,441.5 989.5,455.8 991.2,467.1 C992.9,478.5 994.7,493.2 995.3,499.2 C995.9,505.1 993.8,498.7 994.8,502.9 C995.9,507.0 1000.2,512.5 1001.6,524.1 C1002.9,535.7 1002.9,556.2 1003.0,572.3 C1003.1,588.4 1002.5,603.9 1002.0,620.5 C1001.6,637.0 1000.5,655.0 1000.1,671.6 C999.7,688.1 999.7,711.7 999.6,719.8" fill="none" stroke="#e3c85a" stroke-width="7.6" stroke-linecap="round" stroke-linejoin="round" />
<path d="M1212.8,286.9 C1212.0,289.6 1211.6,296.5 1208.0,303.3 C1204.4,310.0 1198.8,318.5 1191.1,327.4 C1183.5,336.2 1169.2,345.8 1162.2,356.3 C1155.2,366.7 1151.9,378.0 1149.0,390.0 C1146.0,402.1 1145.0,409.6 1144.4,428.6 C1143.8,447.5 1146.2,491.4 1145.3,503.8 C1144.5,516.1 1140.3,499.7 1139.3,502.9 C1138.3,506.1 1139.3,519.6 1139.3,522.9" fill="none" stroke="#e3c85a" stroke-width="7.6" stroke-linecap="round" stroke-linejoin="round" />
<path d="M792.9,668.7 C794.8,665.1 799.7,654.0 804.5,647.0 C809.2,640.0 813.7,631.9 821.3,626.5 C829.0,621.1 833.8,620.6 850.2,614.5 C866.7,608.3 899.6,596.6 920.1,589.6 C940.6,582.7 958.2,577.7 973.1,572.8 C988.1,567.9 999.1,563.3 1009.8,560.2 C1020.4,557.1 1021.9,559.0 1036.9,554.2 C1051.9,549.4 1082.7,536.5 1099.6,531.3 C1116.4,526.2 1125.3,525.7 1138.1,523.4 C1151.0,521.0 1163.0,518.3 1176.7,517.3 C1190.3,516.4 1211.5,518.2 1220.0,517.8 C1228.6,517.4 1226.5,515.4 1227.8,514.9" fill="none" stroke="#f8e07a" stroke-width="6.4" stroke-linecap="round" stroke-linejoin="round" />
<path d="M947.8,287.0 C949.3,291.8 953.6,303.2 957.0,316.0 C960.4,328.8 964.7,349.3 968.2,364.0 C971.7,378.7 975.2,392.8 978.0,404.0 C980.8,415.2 983.0,420.5 985.2,431.0 C987.4,441.5 989.5,455.8 991.2,467.1 C992.9,478.5 994.7,493.2 995.3,499.2 C995.9,505.1 993.8,498.7 994.8,502.9 C995.9,507.0 1000.2,512.5 1001.6,524.1 C1002.9,535.7 1002.9,556.2 1003.0,572.3 C1003.1,588.4 1002.5,603.9 1002.0,620.5 C1001.6,637.0 1000.5,655.0 1000.1,671.6 C999.7,688.1 999.7,711.7 999.6,719.8" fill="none" stroke="#f8e07a" stroke-width="6.4" stroke-linecap="round" stroke-linejoin="round" />
<path d="M1212.8,286.9 C1212.0,289.6 1211.6,296.5 1208.0,303.3 C1204.4,310.0 1198.8,318.5 1191.1,327.4 C1183.5,336.2 1169.2,345.8 1162.2,356.3 C1155.2,366.7 1151.9,378.0 1149.0,390.0 C1146.0,402.1 1145.0,409.6 1144.4,428.6 C1143.8,447.5 1146.2,491.4 1145.3,503.8 C1144.5,516.1 1140.3,499.7 1139.3,502.9 C1138.3,506.1 1139.3,519.6 1139.3,522.9" fill="none" stroke="#f8e07a" stroke-width="6.4" stroke-linecap="round" stroke-linejoin="round" />
<polygon points="792.9,659.0 816.5,621.7 828.6,620.5 850.2,613.3 823.7,630.1 797.2,672.3 792.9,672.3" fill="#f8e07a" />
<path d="M792.9,459.9 C800.6,455.2 825.8,439.9 839.4,431.5 C853.0,423.0 863.7,415.3 874.3,409.3 C885.0,403.3 893.2,399.3 903.3,395.3 C913.3,391.3 923.3,389.4 934.6,385.2 C945.8,381.0 958.2,374.8 970.7,370.0 C983.3,365.2 1001.1,359.7 1009.8,356.3 C1018.4,352.9 1017.7,350.8 1022.5,349.5 C1027.2,348.3 1032.5,347.8 1038.1,348.6 C1043.7,349.4 1049.6,350.7 1056.2,354.4 C1062.8,358.1 1069.0,366.6 1077.9,370.7 C1086.7,374.9 1098.0,377.4 1109.2,379.2 C1120.4,381.0 1136.5,380.5 1145.3,381.6 C1154.2,382.7 1153.0,381.9 1162.2,385.7 C1171.5,389.5 1189.8,398.1 1200.8,404.5 C1211.7,410.8 1223.3,420.5 1227.8,423.8" fill="none" stroke="#efa765" stroke-width="9.4" stroke-linecap="round" stroke-linejoin="round" />
<path d="M908.0,287.0 C910.8,289.8 921.0,299.0 925.0,304.0 C929.0,309.0 930.0,311.5 932.0,317.0 C934.0,322.5 935.8,329.3 937.0,337.0 C938.2,344.7 939.0,355.2 939.5,363.0 C940.0,370.8 939.8,373.1 940.0,384.0 C940.2,394.9 939.6,413.1 941.0,428.6 C942.4,444.1 946.5,464.4 948.3,476.8 C950.0,489.2 951.2,497.0 951.5,503.0 C951.8,509.0 952.7,508.0 949.8,513.0 C946.9,518.0 937.2,526.4 934.0,533.0 C930.8,539.6 930.9,546.1 930.4,552.6 C929.9,559.1 930.1,565.4 931.0,572.0 C931.9,578.6 934.4,584.3 936.0,592.0 C937.6,599.7 936.4,608.4 940.6,618.0 C944.8,627.6 954.2,636.9 961.0,649.4 C967.8,661.9 977.3,681.1 981.6,692.8 C985.9,704.5 986.1,715.3 987.0,719.8" fill="none" stroke="#efa765" stroke-width="21.4" stroke-linecap="round" stroke-linejoin="round" />
<path d="M908.0,287.0 C910.8,289.8 921.0,299.0 925.0,304.0 C929.0,309.0 930.0,311.5 932.0,317.0 C934.0,322.5 935.8,329.3 937.0,337.0 C938.2,344.7 939.0,355.2 939.5,363.0 C940.0,370.8 939.8,373.1 940.0,384.0 C940.2,394.9 939.6,413.1 941.0,428.6 C942.4,444.1 946.5,464.4 948.3,476.8 C950.0,489.2 951.2,497.0 951.5,503.0 C951.8,509.0 952.7,508.0 949.8,513.0 C946.9,518.0 937.2,526.4 934.0,533.0 C930.8,539.6 930.9,546.1 930.4,552.6 C929.9,559.1 930.1,565.4 931.0,572.0 C931.9,578.6 934.4,584.3 936.0,592.0 C937.6,599.7 936.4,608.4 940.6,618.0 C944.8,627.6 954.2,636.9 961.0,649.4 C967.8,661.9 977.3,681.1 981.6,692.8 C985.9,704.5 986.1,715.3 987.0,719.8" fill="none" stroke="#fbc07f" stroke-width="19.6" stroke-linecap="round" stroke-linejoin="round" />
<path d="M792.9,459.9 C800.6,455.2 825.8,439.9 839.4,431.5 C853.0,423.0 863.7,415.3 874.3,409.3 C885.0,403.3 893.2,399.3 903.3,395.3 C913.3,391.3 923.3,389.4 934.6,385.2 C945.8,381.0 958.2,374.8 970.7,370.0 C983.3,365.2 1001.1,359.7 1009.8,356.3 C1018.4,352.9 1017.7,350.8 1022.5,349.5 C1027.2,348.3 1032.5,347.8 1038.1,348.6 C1043.7,349.4 1049.6,350.7 1056.2,354.4 C1062.8,358.1 1069.0,366.6 1077.9,370.7 C1086.7,374.9 1098.0,377.4 1109.2,379.2 C1120.4,381.0 1136.5,380.5 1145.3,381.6 C1154.2,382.7 1153.0,381.9 1162.2,385.7 C1171.5,389.5 1189.8,398.1 1200.8,404.5 C1211.7,410.8 1223.3,420.5 1227.8,423.8" fill="none" stroke="#fbc07f" stroke-width="8.0" stroke-linecap="round" stroke-linejoin="round" />
<path d="M1049.0,337.0 C1049.6,338.6 1051.2,343.8 1052.6,346.7 C1054.0,349.5 1056.6,353.1 1057.4,354.4" fill="none" stroke="#fbc07f" stroke-width="4.5" stroke-linecap="round" stroke-linejoin="round" />
<path d="M908.0,287.0 C910.8,289.8 921.0,299.0 925.0,304.0 C929.0,309.0 930.0,311.5 932.0,317.0 C934.0,322.5 935.8,329.3 937.0,337.0 C938.2,344.7 939.0,355.2 939.5,363.0 C940.0,370.8 939.8,373.1 940.0,384.0 C940.2,394.9 939.6,413.1 941.0,428.6 C942.4,444.1 946.5,464.4 948.3,476.8 C950.0,489.2 951.2,497.0 951.5,503.0 C951.8,509.0 952.7,508.0 949.8,513.0 C946.9,518.0 937.2,526.4 934.0,533.0 C930.8,539.6 930.9,546.1 930.4,552.6 C929.9,559.1 930.1,565.4 931.0,572.0 C931.9,578.6 934.4,584.3 936.0,592.0 C937.6,599.7 936.4,608.4 940.6,618.0 C944.8,627.6 954.2,636.9 961.0,649.4 C967.8,661.9 977.3,681.1 981.6,692.8 C985.9,704.5 986.1,715.3 987.0,719.8" fill="none" stroke="#a3d0ea" stroke-width="5.0" stroke-linecap="round" stroke-linejoin="round" />
<path d="M908.0,287.0 C910.8,289.8 921.0,299.0 925.0,304.0 C929.0,309.0 930.0,311.5 932.0,317.0 C934.0,322.5 935.8,329.3 937.0,337.0 C938.2,344.7 939.0,355.2 939.5,363.0 C940.0,370.8 939.8,373.1 940.0,384.0 C940.2,394.9 939.6,413.1 941.0,428.6 C942.4,444.1 946.5,464.4 948.3,476.8 C950.0,489.2 951.2,497.0 951.5,503.0 C951.8,509.0 952.7,508.0 949.8,513.0 C946.9,518.0 937.2,526.4 934.0,533.0 C930.8,539.6 930.9,546.1 930.4,552.6 C929.9,559.1 930.1,565.4 931.0,572.0 C931.9,578.6 934.4,584.3 936.0,592.0 C937.6,599.7 936.4,608.4 940.6,618.0 C944.8,627.6 954.2,636.9 961.0,649.4 C967.8,661.9 977.3,681.1 981.6,692.8 C985.9,704.5 986.1,715.3 987.0,719.8" fill="none" stroke="#f3b877" stroke-width="0.0" stroke-linecap="round" stroke-linejoin="round" />
<path d="M1224.3,365.0 L1224.8,388.0" fill="none" stroke="#fbc07f" stroke-width="2.2" stroke-linecap="round" stroke-linejoin="round" />
<polygon points="1144.1,379.2 1152.6,372.0 1162.2,375.6 1164.6,386.4 1152.6,392.4 1145.3,387.6" fill="#fbc07f" />
<path d="M792.9,456.3 C800.6,452.2 825.8,439.5 839.4,431.5 C853.0,423.4 863.7,414.1 874.3,408.1 C885.0,402.1 893.2,399.5 903.3,395.3 C913.3,391.2 923.3,387.5 934.6,383.3 C945.8,379.1 958.2,374.7 970.7,370.0 C983.3,365.4 1001.1,358.9 1009.8,355.3 C1018.4,351.8 1017.7,349.9 1022.5,348.6 C1027.2,347.3 1032.5,346.3 1038.1,347.6 C1043.7,348.9 1049.6,352.0 1056.2,356.3 C1062.7,360.5 1067.4,367.1 1077.4,373.2 C1087.4,379.2 1103.9,386.3 1116.4,392.4 C1129.0,398.5 1146.6,406.9 1152.6,409.8" fill="none" stroke="#b8642a" stroke-width="1.3" stroke-linecap="round" stroke-linejoin="round" />
<path d="M946.6,287.0 C948.1,291.8 952.4,303.2 955.8,316.0 C959.2,328.8 963.5,349.3 967.0,364.0 C970.5,378.7 973.9,392.8 976.8,404.0 C979.7,415.2 982.4,420.5 984.7,431.0 C987.0,441.5 988.7,455.8 990.5,467.1 C992.2,478.5 994.5,493.8 995.3,499.2" fill="none" stroke="#8d8a2b" stroke-width="2.6" stroke-linecap="round" stroke-linejoin="round" />
<path d="M946.6,287.0 C948.1,291.8 952.4,303.2 955.8,316.0 C959.2,328.8 963.5,349.3 967.0,364.0 C970.5,378.7 973.9,392.8 976.8,404.0 C979.7,415.2 982.4,420.5 984.7,431.0 C987.0,441.5 988.7,455.8 990.5,467.1 C992.2,478.5 994.5,493.8 995.3,499.2" fill="none" stroke="#e9dc7c" stroke-width="0.8" stroke-linecap="round" stroke-linejoin="round" />
<path d="M995.3,499.2 C995.4,499.3 995.3,497.5 996.0,500.0 C996.7,502.5 997.6,509.6 999.6,514.5 C1001.6,519.3 1001.8,522.7 1008.0,528.9 C1014.2,535.1 1030.9,542.2 1036.9,551.8 C1042.9,561.4 1041.7,575.6 1044.1,586.7 C1046.6,597.9 1049.0,608.9 1051.4,618.6 C1053.8,628.2 1057.6,635.7 1058.6,644.6 C1059.6,653.4 1057.8,659.0 1057.4,671.6 C1057.0,684.1 1056.4,711.7 1056.2,719.8" fill="none" stroke="#8d8a2b" stroke-width="1.3" stroke-linecap="round" stroke-linejoin="round" />
<path d="M866.3,286.9 C868.3,292.4 873.9,307.4 878.3,320.1 C882.8,332.9 888.4,351.0 892.8,363.5 C897.2,376.0 900.8,384.5 904.9,395.3 C908.9,406.2 914.7,415.0 916.9,428.6 C919.1,442.2 917.9,464.2 918.1,476.8 C918.3,489.3 918.1,499.3 918.1,503.8" fill="none" stroke="#43b9cf" stroke-width="1.6" stroke-linecap="round" stroke-linejoin="round" />
<path d="M864.7,286.9 C866.7,292.4 872.3,307.4 876.7,320.1 C881.2,332.9 886.8,351.0 891.2,363.5 C895.6,376.0 899.2,384.5 903.3,395.3 C907.3,406.2 913.1,415.0 915.3,428.6 C917.5,442.2 916.3,464.2 916.5,476.8 C916.7,489.3 916.9,498.7 916.5,503.8 C916.1,508.8 918.7,498.8 914.1,507.2 C909.5,515.6 899.4,537.0 888.8,554.2 C878.2,571.4 863.2,595.3 850.7,610.4 C838.3,625.4 823.7,634.7 814.1,644.6 C804.5,654.5 796.4,665.7 792.9,669.9" fill="none" stroke="#2c56b8" stroke-width="2.0" stroke-linecap="round" stroke-linejoin="round" />
<path d="M792.9,674.7 C797.2,668.9 809.4,650.6 818.9,639.8 C828.5,628.9 841.8,617.2 850.2,609.6 C858.7,602.1 857.9,599.3 869.5,594.5 C881.2,589.6 902.9,585.5 920.1,580.7 C937.4,575.9 958.2,569.4 973.1,565.5 C988.1,561.6 999.1,560.0 1009.8,557.3 C1020.4,554.7 1027.2,554.5 1036.9,549.4 C1046.7,544.3 1057.0,533.1 1068.2,527.0 C1079.5,520.8 1093.5,516.5 1104.4,512.5 C1115.2,508.5 1128.5,504.5 1133.3,502.9" fill="none" stroke="#8db9d8" stroke-width="3.0" stroke-linecap="round" stroke-linejoin="round" />
<path d="M792.9,674.7 C797.2,668.9 809.4,650.6 818.9,639.8 C828.5,628.9 841.8,617.2 850.2,609.6 C858.7,602.1 857.9,599.3 869.5,594.5 C881.2,589.6 902.9,585.5 920.1,580.7 C937.4,575.9 958.2,569.4 973.1,565.5 C988.1,561.6 999.1,560.0 1009.8,557.3 C1020.4,554.7 1027.2,554.5 1036.9,549.4 C1046.7,544.3 1057.0,533.1 1068.2,527.0 C1079.5,520.8 1093.5,516.5 1104.4,512.5 C1115.2,508.5 1128.5,504.5 1133.3,502.9" fill="none" stroke="#4fc0cf" stroke-width="1.0" stroke-linecap="round" stroke-linejoin="round" />
<path d="M1206.8,286.9 C1205.0,291.2 1201.8,300.1 1196.0,312.9 C1190.1,325.7 1177.5,350.3 1171.9,363.5 C1166.2,376.8 1164.4,384.4 1162.2,392.4 C1160.0,400.5 1158.9,397.7 1158.6,411.7 C1158.3,425.8 1162.9,462.6 1160.3,476.8 C1157.7,490.9 1148.2,492.0 1142.9,496.5 C1137.6,501.0 1134.9,501.1 1128.5,503.8 C1122.1,506.4 1108.4,511.1 1104.4,512.5" fill="none" stroke="#a9d9e6" stroke-width="3.4" stroke-linecap="round" stroke-linejoin="round" />
<path d="M1206.8,286.9 C1205.0,291.2 1201.8,300.1 1196.0,312.9 C1190.1,325.7 1177.5,350.3 1171.9,363.5 C1166.2,376.8 1164.4,384.4 1162.2,392.4 C1160.0,400.5 1158.9,397.7 1158.6,411.7 C1158.3,425.8 1162.9,462.6 1160.3,476.8 C1157.7,490.9 1148.2,492.0 1142.9,496.5 C1137.6,501.0 1134.9,501.1 1128.5,503.8 C1122.1,506.4 1108.4,511.1 1104.4,512.5" fill="none" stroke="#3aa9c0" stroke-width="1.6" stroke-linecap="round" stroke-linejoin="round" />
<path d="M917.7,502.9 C920.5,506.1 926.9,515.3 934.6,522.2 C942.2,529.0 953.5,538.2 963.5,543.9 C973.5,549.5 987.1,553.7 994.8,555.9 C1002.5,558.2 1007.3,557.1 1009.8,557.3" fill="none" stroke="#8fc6d2" stroke-width="2.6" stroke-linecap="round" stroke-linejoin="round" />
<path d="M917.7,502.9 C920.5,506.1 926.9,515.3 934.6,522.2 C942.2,529.0 953.5,538.2 963.5,543.9 C973.5,549.5 987.1,553.7 994.8,555.9 C1002.5,558.2 1007.3,557.1 1009.8,557.3" fill="none" stroke="#3ab5c5" stroke-width="1.2" stroke-linecap="round" stroke-linejoin="round" />
<path d="M1227.8,456.3 C1221.7,457.7 1201.3,460.9 1191.1,464.7 C1181.0,468.5 1175.1,473.9 1167.0,479.2 C1159.0,484.5 1147.0,493.6 1142.9,496.5" fill="none" stroke="#b5dcec" stroke-width="4.0" stroke-linecap="round" stroke-linejoin="round" />
<path d="M1227.8,456.3 C1221.7,457.7 1201.3,460.9 1191.1,464.7 C1181.0,468.5 1175.1,473.9 1167.0,479.2 C1159.0,484.5 1147.0,493.6 1142.9,496.5" fill="none" stroke="#6fc0dc" stroke-width="1.6" stroke-linecap="round" stroke-linejoin="round" />
<g transform="translate(876.7,320.1)"><circle r="7.0" fill="#fff" stroke="#555" stroke-width="1.4"/><path d="M0,0 A2.70,2.70 0 0 1 -1.12,-5.28 A5.40,5.40 0 0 1 5.14,1.67 A2.70,2.70 0 0 0 0,0 Z" fill="#f23a3a"/><path d="M0,0 A2.70,2.70 0 0 1 5.14,1.67 A5.40,5.40 0 0 1 -4.01,3.61 A2.70,2.70 0 0 0 0,0 Z" fill="#f7d936"/><path d="M0,0 A2.70,2.70 0 0 1 -4.01,3.61 A5.40,5.40 0 0 1 -1.12,-5.28 A2.70,2.70 0 0 0 0,0 Z" fill="#3f68d8"/></g>
<g transform="translate(903.3,395.3)"><circle r="7.0" fill="#fff" stroke="#555" stroke-width="1.4"/><path d="M0,0 A2.70,2.70 0 0 1 -1.12,-5.28 A5.40,5.40 0 0 1 5.14,1.67 A2.70,2.70 0 0 0 0,0 Z" fill="#f23a3a"/><path d="M0,0 A2.70,2.70 0 0 1 5.14,1.67 A5.40,5.40 0 0 1 -4.01,3.61 A2.70,2.70 0 0 0 0,0 Z" fill="#f7d936"/><path d="M0,0 A2.70,2.70 0 0 1 -4.01,3.61 A5.40,5.40 0 0 1 -1.12,-5.28 A2.70,2.70 0 0 0 0,0 Z" fill="#3f68d8"/></g>
<g transform="translate(970.7,370.0)"><circle r="7.0" fill="#fff" stroke="#555" stroke-width="1.4"/><path d="M0,0 A2.70,2.70 0 0 1 -1.12,-5.28 A5.40,5.40 0 0 1 5.14,1.67 A2.70,2.70 0 0 0 0,0 Z" fill="#f23a3a"/><path d="M0,0 A2.70,2.70 0 0 1 5.14,1.67 A5.40,5.40 0 0 1 -4.01,3.61 A2.70,2.70 0 0 0 0,0 Z" fill="#f7d936"/><path d="M0,0 A2.70,2.70 0 0 1 -4.01,3.61 A5.40,5.40 0 0 1 -1.12,-5.28 A2.70,2.70 0 0 0 0,0 Z" fill="#3f68d8"/></g>
<g transform="translate(1158.6,411.7)"><circle r="7.0" fill="#fff" stroke="#555" stroke-width="1.4"/><path d="M0,0 A2.70,2.70 0 0 1 -1.12,-5.28 A5.40,5.40 0 0 1 5.14,1.67 A2.70,2.70 0 0 0 0,0 Z" fill="#f23a3a"/><path d="M0,0 A2.70,2.70 0 0 1 5.14,1.67 A5.40,5.40 0 0 1 -4.01,3.61 A2.70,2.70 0 0 0 0,0 Z" fill="#f7d936"/><path d="M0,0 A2.70,2.70 0 0 1 -4.01,3.61 A5.40,5.40 0 0 1 -1.12,-5.28 A2.70,2.70 0 0 0 0,0 Z" fill="#3f68d8"/></g>
<g transform="translate(850.7,610.4)"><circle r="7.0" fill="#fff" stroke="#555" stroke-width="1.4"/><path d="M0,0 A2.70,2.70 0 0 1 -1.12,-5.28 A5.40,5.40 0 0 1 5.14,1.67 A2.70,2.70 0 0 0 0,0 Z" fill="#f23a3a"/><path d="M0,0 A2.70,2.70 0 0 1 5.14,1.67 A5.40,5.40 0 0 1 -4.01,3.61 A2.70,2.70 0 0 0 0,0 Z" fill="#f7d936"/><path d="M0,0 A2.70,2.70 0 0 1 -4.01,3.61 A5.40,5.40 0 0 1 -1.12,-5.28 A2.70,2.70 0 0 0 0,0 Z" fill="#3f68d8"/></g>
<g transform="translate(974.8,565.1)"><circle r="7.0" fill="#fff" stroke="#555" stroke-width="1.4"/><path d="M0,0 A2.70,2.70 0 0 1 -1.12,-5.28 A5.40,5.40 0 0 1 5.14,1.67 A2.70,2.70 0 0 0 0,0 Z" fill="#f23a3a"/><path d="M0,0 A2.70,2.70 0 0 1 5.14,1.67 A5.40,5.40 0 0 1 -4.01,3.61 A2.70,2.70 0 0 0 0,0 Z" fill="#f7d936"/><path d="M0,0 A2.70,2.70 0 0 1 -4.01,3.61 A5.40,5.40 0 0 1 -1.12,-5.28 A2.70,2.70 0 0 0 0,0 Z" fill="#3f68d8"/></g>
<g transform="translate(1036.9,549.4)"><circle r="7.0" fill="#fff" stroke="#555" stroke-width="1.4"/><path d="M0,0 A2.70,2.70 0 0 1 -1.12,-5.28 A5.40,5.40 0 0 1 5.14,1.67 A2.70,2.70 0 0 0 0,0 Z" fill="#f23a3a"/><path d="M0,0 A2.70,2.70 0 0 1 5.14,1.67 A5.40,5.40 0 0 1 -4.01,3.61 A2.70,2.70 0 0 0 0,0 Z" fill="#f7d936"/><path d="M0,0 A2.70,2.70 0 0 1 -4.01,3.61 A5.40,5.40 0 0 1 -1.12,-5.28 A2.70,2.70 0 0 0 0,0 Z" fill="#3f68d8"/></g>
<circle cx="952.7" cy="302.8" r="3.6" fill="#fff" stroke="#8d8a2b" stroke-width="1.6"/>
<circle cx="839.4" cy="431.5" r="3.6" fill="#fff" stroke="#c9772f" stroke-width="1.6"/>
<circle cx="984.7" cy="431.0" r="3.6" fill="#fff" stroke="#8d8a2b" stroke-width="1.6"/>
<circle cx="995.3" cy="499.2" r="3.6" fill="#fff" stroke="#8d8a2b" stroke-width="1.6"/>
<circle cx="1077.4" cy="373.2" r="3.6" fill="#fff" stroke="#c9772f" stroke-width="1.6"/>
<circle cx="1191.1" cy="464.7" r="3.6" fill="#fff" stroke="#45bcd0" stroke-width="1.6"/>
<circle cx="914.1" cy="507.2" r="3.6" fill="#fff" stroke="#2c56b8" stroke-width="1.6"/>
<circle cx="888.8" cy="554.2" r="3.6" fill="#fff" stroke="#2c56b8" stroke-width="1.6"/>
<circle cx="1051.4" cy="618.6" r="3.6" fill="#fff" stroke="#8d8a2b" stroke-width="1.6"/>
<g transform="translate(852.2,357.0)"><circle r="9.0" fill="#4a8fd5"/><path d="M-5.3,-1.1 L0.3,-4.4 L6.2,-1.1 L0.3,1.9 Z" fill="#fff"/><path d="M-3.6,0.9 L0.3,3.1 L4.5,0.9 L4.5,2.5 L0.3,4.9 L-3.6,2.5 Z" fill="#fff"/><path d="M5.5,-0.6 V2.4" stroke="#fff" stroke-width="0.7" fill="none"/></g>
<g transform="translate(1091.1,297.3)"><circle r="9.0" fill="#4a8fd5"/><path d="M-5.3,-1.1 L0.3,-4.4 L6.2,-1.1 L0.3,1.9 Z" fill="#fff"/><path d="M-3.6,0.9 L0.3,3.1 L4.5,0.9 L4.5,2.5 L0.3,4.9 L-3.6,2.5 Z" fill="#fff"/><path d="M5.5,-0.6 V2.4" stroke="#fff" stroke-width="0.7" fill="none"/></g>
<g transform="translate(815.3,549.9)"><circle r="9.0" fill="#4a8fd5"/><path d="M-5.3,-1.1 L0.3,-4.4 L6.2,-1.1 L0.3,1.9 Z" fill="#fff"/><path d="M-3.6,0.9 L0.3,3.1 L4.5,0.9 L4.5,2.5 L0.3,4.9 L-3.6,2.5 Z" fill="#fff"/><path d="M5.5,-0.6 V2.4" stroke="#fff" stroke-width="0.7" fill="none"/></g>
<g transform="translate(849.0,544.1)"><circle r="9.0" fill="#4a8fd5"/><path d="M-5.3,-1.1 L0.3,-4.4 L6.2,-1.1 L0.3,1.9 Z" fill="#fff"/><path d="M-3.6,0.9 L0.3,3.1 L4.5,0.9 L4.5,2.5 L0.3,4.9 L-3.6,2.5 Z" fill="#fff"/><path d="M5.5,-0.6 V2.4" stroke="#fff" stroke-width="0.7" fill="none"/></g>
<g transform="translate(848.6,652.3)"><circle r="9.0" fill="#4a8fd5"/><path d="M-5.3,-1.1 L0.3,-4.4 L6.2,-1.1 L0.3,1.9 Z" fill="#fff"/><path d="M-3.6,0.9 L0.3,3.1 L4.5,0.9 L4.5,2.5 L0.3,4.9 L-3.6,2.5 Z" fill="#fff"/><path d="M5.5,-0.6 V2.4" stroke="#fff" stroke-width="0.7" fill="none"/></g>
<g transform="translate(1121.3,639.8)"><circle r="9.0" fill="#4a8fd5"/><path d="M-5.3,-1.1 L0.3,-4.4 L6.2,-1.1 L0.3,1.9 Z" fill="#fff"/><path d="M-3.6,0.9 L0.3,3.1 L4.5,0.9 L4.5,2.5 L0.3,4.9 L-3.6,2.5 Z" fill="#fff"/><path d="M5.5,-0.6 V2.4" stroke="#fff" stroke-width="0.7" fill="none"/></g>
<g transform="translate(1167.4,365.3)"><circle r="8.8" fill="#6f8299"/><path d="M-6,-3.4 Q-4,-2.4 -2.2,-1 Q-1,-3 0,-4 Q1,-3 2.2,-1 Q4,-2.4 6,-3.4 Q5.6,1 2.6,2.4 Q2,5 0,5.3 Q-2,5 -2.6,2.4 Q-5.6,1 -6,-3.4 Z" fill="#fff"/><circle cx="0" cy="2" r="0.9" fill="#6f8299"/></g>
<g transform="translate(1189.9,485.2)"><circle r="9" fill="#dc6e7c"/><path d="M-1.5,-4.6h3v3.1h3.1v3h-3.1v3.1h-3v-3.1h-3.1v-3h3.1z" fill="#fff"/></g>
<circle cx="1087.5" cy="465.9" r="4.6" fill="#fff" stroke="#333" stroke-width="1.2"/><circle cx="1087.5" cy="465.9" r="1.8" fill="#333"/>
<text x="798.0" y="677.1" font-size="16" text-anchor="start" font-weight="normal" dominant-baseline="central" fill="#f8f8f8" stroke="#f8f8f8" stroke-width="1.5" stroke-linejoin="round">동대문구</text><text x="798.0" y="677.1" font-size="16" text-anchor="start" font-weight="normal" dominant-baseline="central" fill="#aaaaaa">동대문구</text>
<text x="1065.3" y="539.8" font-size="15.5" text-anchor="start" font-weight="normal" dominant-baseline="central" fill="#f8f8f8" stroke="#f8f8f8" stroke-width="1.2" stroke-linejoin="round">중랑구</text><text x="1065.3" y="539.8" font-size="15.5" text-anchor="start" font-weight="normal" dominant-baseline="central" fill="#aaaaaa">중랑구</text>
<circle cx="972.4" cy="479.8" r="17.2" fill="#1f33ff"/><path d="M961.1,492.8 L960.8,501.5 L969.4,496.7 Z" fill="#1f33ff"/><g transform="translate(972.4,479.8) rotate(-45) scale(1.000)" fill="none" stroke="#fff" stroke-width="1.25" stroke-linejoin="miter"><rect x="-13.6" y="-1.5" width="14.4" height="3" rx="1.5"/><path d="M0.9,6.4 L9.1,6.4 L9.1,-6.4 L7,-4.6 L5,-6.8 L3,-4.6 L0.9,-6.5 Z" fill="#1f33ff"/></g>
<text x="886.9" y="320.1" font-size="11.9" text-anchor="start" font-weight="normal" dominant-baseline="central" fill="#fff" stroke="#fff" stroke-width="2.6" stroke-linejoin="round">광운대역</text><text x="886.9" y="320.1" font-size="11.9" text-anchor="start" font-weight="normal" dominant-baseline="central" fill="#333" stroke="#333" stroke-width="0.5">광운대역</text>
<text x="958.2" y="302.8" font-size="11.9" text-anchor="start" font-weight="normal" dominant-baseline="central" fill="#fff" stroke="#fff" stroke-width="2.6" stroke-linejoin="round">공릉역</text><text x="958.2" y="302.8" font-size="11.9" text-anchor="start" font-weight="normal" dominant-baseline="central" fill="#333" stroke="#333" stroke-width="0.5">공릉역</text>
<text x="981.1" y="370.3" font-size="11.9" text-anchor="start" font-weight="normal" dominant-baseline="central" fill="#fff" stroke="#fff" stroke-width="2.6" stroke-linejoin="round">태릉입구역</text><text x="981.1" y="370.3" font-size="11.9" text-anchor="start" font-weight="normal" dominant-baseline="central" fill="#333" stroke="#333" stroke-width="0.5">태릉입구역</text>
<text x="912.9" y="395.3" font-size="11.9" text-anchor="start" font-weight="normal" dominant-baseline="central" fill="#fff" stroke="#fff" stroke-width="2.6" stroke-linejoin="round">석계역</text><text x="912.9" y="395.3" font-size="11.9" text-anchor="start" font-weight="normal" dominant-baseline="central" fill="#333" stroke="#333" stroke-width="0.5">석계역</text>
<text x="845.4" y="431.5" font-size="11.9" text-anchor="start" font-weight="normal" dominant-baseline="central" fill="#fff" stroke="#fff" stroke-width="2.6" stroke-linejoin="round">돌곶이역</text><text x="845.4" y="431.5" font-size="11.9" text-anchor="start" font-weight="normal" dominant-baseline="central" fill="#333" stroke="#333" stroke-width="0.5">돌곶이역</text>
<text x="793.9" y="465.9" font-size="11.9" text-anchor="start" font-weight="normal" dominant-baseline="central" fill="#fff" stroke="#fff" stroke-width="2.6" stroke-linejoin="round">상월곡역</text><text x="793.9" y="465.9" font-size="11.9" text-anchor="start" font-weight="normal" dominant-baseline="central" fill="#333" stroke="#333" stroke-width="0.5">상월곡역</text>
<text x="990.7" y="431.0" font-size="11.9" text-anchor="start" font-weight="normal" dominant-baseline="central" fill="#fff" stroke="#fff" stroke-width="2.6" stroke-linejoin="round">먹골역</text><text x="990.7" y="431.0" font-size="11.9" text-anchor="start" font-weight="normal" dominant-baseline="central" fill="#333" stroke="#333" stroke-width="0.5">먹골역</text>
<text x="1001.1" y="499.2" font-size="11.9" text-anchor="start" font-weight="normal" dominant-baseline="central" fill="#fff" stroke="#fff" stroke-width="2.6" stroke-linejoin="round">중화역</text><text x="1001.1" y="499.2" font-size="11.9" text-anchor="start" font-weight="normal" dominant-baseline="central" fill="#333" stroke="#333" stroke-width="0.5">중화역</text>
<text x="851.9" y="375.1" font-size="12.7" text-anchor="middle" font-weight="normal" dominant-baseline="central" fill="#fff" stroke="#fff" stroke-width="2.6" stroke-linejoin="round">광운대학교</text><text x="851.9" y="375.1" font-size="12.7" text-anchor="middle" font-weight="normal" dominant-baseline="central" fill="#3278c4" stroke="#3278c4" stroke-width="0.55">광운대학교</text>
<text x="1090.4" y="315.3" font-size="12.7" text-anchor="middle" font-weight="normal" dominant-baseline="central" fill="#fff" stroke="#fff" stroke-width="2.6" stroke-linejoin="round">서울여자대학교</text><text x="1090.4" y="315.3" font-size="12.7" text-anchor="middle" font-weight="normal" dominant-baseline="central" fill="#3278c4" stroke="#3278c4" stroke-width="0.55">서울여자대학교</text>
<text x="1090.4" y="330.7" font-size="12.7" text-anchor="middle" font-weight="normal" dominant-baseline="central" fill="#fff" stroke="#fff" stroke-width="2.6" stroke-linejoin="round">서울캠퍼스</text><text x="1090.4" y="330.7" font-size="12.7" text-anchor="middle" font-weight="normal" dominant-baseline="central" fill="#3278c4" stroke="#3278c4" stroke-width="0.55">서울캠퍼스</text>
<text x="1189.2" y="294.8" font-size="11.9" text-anchor="start" font-weight="normal" dominant-baseline="central" fill="#fff" stroke="#fff" stroke-width="2.6" stroke-linejoin="round">단련장</text><text x="1189.2" y="294.8" font-size="11.9" text-anchor="start" font-weight="normal" dominant-baseline="central" fill="#5a8a4a" stroke="#5a8a4a" stroke-width="0.5">단련장</text>
<text x="1178.6" y="359.2" font-size="11.9" text-anchor="start" font-weight="normal" dominant-baseline="central" fill="#fff" stroke="#fff" stroke-width="2.6" stroke-linejoin="round">서울중랑</text><text x="1178.6" y="359.2" font-size="11.9" text-anchor="start" font-weight="normal" dominant-baseline="central" fill="#555" stroke="#555" stroke-width="0.5">서울중랑</text>
<text x="1178.6" y="373.2" font-size="11.9" text-anchor="start" font-weight="normal" dominant-baseline="central" fill="#fff" stroke="#fff" stroke-width="2.6" stroke-linejoin="round">경찰서</text><text x="1178.6" y="373.2" font-size="11.9" text-anchor="start" font-weight="normal" dominant-baseline="central" fill="#555" stroke="#555" stroke-width="0.5">경찰서</text>
<text x="1083.4" y="373.6" font-size="11.9" text-anchor="start" font-weight="normal" dominant-baseline="central" fill="#fff" stroke="#fff" stroke-width="2.6" stroke-linejoin="round">봉화산역</text><text x="1083.4" y="373.6" font-size="11.9" text-anchor="start" font-weight="normal" dominant-baseline="central" fill="#333" stroke="#333" stroke-width="0.5">봉화산역</text>
<text x="1168.5" y="411.7" font-size="11.9" text-anchor="start" font-weight="normal" dominant-baseline="central" fill="#fff" stroke="#fff" stroke-width="2.6" stroke-linejoin="round">신내역</text><text x="1168.5" y="411.7" font-size="11.9" text-anchor="start" font-weight="normal" dominant-baseline="central" fill="#333" stroke="#333" stroke-width="0.5">신내역</text>
<text x="1088.2" y="481.6" font-size="15.5" text-anchor="middle" font-weight="normal" dominant-baseline="central" fill="#fff" stroke="#fff" stroke-width="2.6" stroke-linejoin="round">중랑구청</text><text x="1088.2" y="481.6" font-size="15.5" text-anchor="middle" font-weight="normal" dominant-baseline="central" fill="#333" stroke="#333" stroke-width="0.5">중랑구청</text>
<text x="1196.7" y="464.2" font-size="11.9" text-anchor="start" font-weight="normal" dominant-baseline="central" fill="#fff" stroke="#fff" stroke-width="2.6" stroke-linejoin="round">양원역</text><text x="1196.7" y="464.2" font-size="11.9" text-anchor="start" font-weight="normal" dominant-baseline="central" fill="#333" stroke="#333" stroke-width="0.5">양원역</text>
<text x="1190.4" y="502.8" font-size="12.3" text-anchor="middle" font-weight="normal" dominant-baseline="central" fill="#fff" stroke="#fff" stroke-width="2.6" stroke-linejoin="round">서울특별시</text><text x="1190.4" y="502.8" font-size="12.3" text-anchor="middle" font-weight="normal" dominant-baseline="central" fill="#c56872" stroke="#c56872" stroke-width="0.5">서울특별시</text>
<text x="1191.1" y="518.1" font-size="12.3" text-anchor="middle" font-weight="normal" dominant-baseline="central" fill="#fff" stroke="#fff" stroke-width="2.6" stroke-linejoin="round">북부병원</text><text x="1191.1" y="518.1" font-size="12.3" text-anchor="middle" font-weight="normal" dominant-baseline="central" fill="#c56872" stroke="#c56872" stroke-width="0.5">북부병원</text>
<text x="849.8" y="510.1" font-size="12.7" text-anchor="middle" font-weight="normal" dominant-baseline="central" fill="#fff" stroke="#fff" stroke-width="2.6" stroke-linejoin="round">한국외국어대학교</text><text x="849.8" y="510.1" font-size="12.7" text-anchor="middle" font-weight="normal" dominant-baseline="central" fill="#3278c4" stroke="#3278c4" stroke-width="0.55">한국외국어대학교</text>
<text x="849.0" y="525.3" font-size="12.7" text-anchor="middle" font-weight="normal" dominant-baseline="central" fill="#fff" stroke="#fff" stroke-width="2.6" stroke-linejoin="round">서울캠퍼스</text><text x="849.0" y="525.3" font-size="12.7" text-anchor="middle" font-weight="normal" dominant-baseline="central" fill="#3278c4" stroke="#3278c4" stroke-width="0.55">서울캠퍼스</text>
<text x="782.8" y="567.5" font-size="12.7" text-anchor="start" font-weight="normal" dominant-baseline="central" fill="#fff" stroke="#fff" stroke-width="2.6" stroke-linejoin="round">경희대학교</text><text x="782.8" y="567.5" font-size="12.7" text-anchor="start" font-weight="normal" dominant-baseline="central" fill="#3278c4" stroke="#3278c4" stroke-width="0.55">경희대학교</text>
<text x="782.8" y="581.9" font-size="12.7" text-anchor="start" font-weight="normal" dominant-baseline="central" fill="#fff" stroke="#fff" stroke-width="2.6" stroke-linejoin="round">서울캠퍼스</text><text x="782.8" y="581.9" font-size="12.7" text-anchor="start" font-weight="normal" dominant-baseline="central" fill="#3278c4" stroke="#3278c4" stroke-width="0.55">서울캠퍼스</text>
<text x="920.8" y="507.2" font-size="11.9" text-anchor="start" font-weight="normal" dominant-baseline="central" fill="#fff" stroke="#fff" stroke-width="2.6" stroke-linejoin="round">신이문역</text><text x="920.8" y="507.2" font-size="11.9" text-anchor="start" font-weight="normal" dominant-baseline="central" fill="#333" stroke="#333" stroke-width="0.5">신이문역</text>
<text x="894.3" y="554.2" font-size="11.9" text-anchor="start" font-weight="normal" dominant-baseline="central" fill="#fff" stroke="#fff" stroke-width="2.6" stroke-linejoin="round">외대앞역</text><text x="894.3" y="554.2" font-size="11.9" text-anchor="start" font-weight="normal" dominant-baseline="central" fill="#333" stroke="#333" stroke-width="0.5">외대앞역</text>
<text x="974.8" y="581.9" font-size="11.9" text-anchor="middle" font-weight="normal" dominant-baseline="central" fill="#fff" stroke="#fff" stroke-width="2.6" stroke-linejoin="round">중랑역</text><text x="974.8" y="581.9" font-size="11.9" text-anchor="middle" font-weight="normal" dominant-baseline="central" fill="#333" stroke="#333" stroke-width="0.5">중랑역</text>
<text x="860.6" y="610.4" font-size="11.9" text-anchor="start" font-weight="normal" dominant-baseline="central" fill="#fff" stroke="#fff" stroke-width="2.6" stroke-linejoin="round">회기역</text><text x="860.6" y="610.4" font-size="11.9" text-anchor="start" font-weight="normal" dominant-baseline="central" fill="#333" stroke="#333" stroke-width="0.5">회기역</text>
<text x="859.9" y="645.8" font-size="12.7" text-anchor="start" font-weight="normal" dominant-baseline="central" fill="#fff" stroke="#fff" stroke-width="2.6" stroke-linejoin="round">서울시립</text><text x="859.9" y="645.8" font-size="12.7" text-anchor="start" font-weight="normal" dominant-baseline="central" fill="#3278c4" stroke="#3278c4" stroke-width="0.55">서울시립</text>
<text x="859.9" y="659.0" font-size="12.7" text-anchor="start" font-weight="normal" dominant-baseline="central" fill="#fff" stroke="#fff" stroke-width="2.6" stroke-linejoin="round">대학교</text><text x="859.9" y="659.0" font-size="12.7" text-anchor="start" font-weight="normal" dominant-baseline="central" fill="#3278c4" stroke="#3278c4" stroke-width="0.55">대학교</text>
<text x="778.0" y="690.4" font-size="11.9" text-anchor="start" font-weight="normal" dominant-baseline="central" fill="#fff" stroke="#fff" stroke-width="2.6" stroke-linejoin="round">청량리역</text><text x="778.0" y="690.4" font-size="11.9" text-anchor="start" font-weight="normal" dominant-baseline="central" fill="#333" stroke="#333" stroke-width="0.5">청량리역</text>
<text x="1046.6" y="549.9" font-size="11.9" text-anchor="start" font-weight="normal" dominant-baseline="central" fill="#fff" stroke="#fff" stroke-width="2.6" stroke-linejoin="round">상봉역</text><text x="1046.6" y="549.9" font-size="11.9" text-anchor="start" font-weight="normal" dominant-baseline="central" fill="#333" stroke="#333" stroke-width="0.5">상봉역</text>
<text x="1057.4" y="618.6" font-size="11.9" text-anchor="start" font-weight="normal" dominant-baseline="central" fill="#fff" stroke="#fff" stroke-width="2.6" stroke-linejoin="round">면목역</text><text x="1057.4" y="618.6" font-size="11.9" text-anchor="start" font-weight="normal" dominant-baseline="central" fill="#333" stroke="#333" stroke-width="0.5">면목역</text>
<text x="1121.7" y="657.8" font-size="12.7" text-anchor="middle" font-weight="normal" dominant-baseline="central" fill="#fff" stroke="#fff" stroke-width="2.6" stroke-linejoin="round">서일대학교</text><text x="1121.7" y="657.8" font-size="12.7" text-anchor="middle" font-weight="normal" dominant-baseline="central" fill="#3278c4" stroke="#3278c4" stroke-width="0.55">서일대학교</text>
<path d="M805.7,698.8 L805.7,704.8 L886.4,704.8" fill="none" stroke="#000" stroke-width="2"/>
<text x="884.5" y="708.3" font-size="12.5" font-weight="bold" fill="#000">1km&#160;&#160;kakao</text>
</svg>
<div class="abs" style="left:867px;top:671.5px;width:284.5px;height:32px;background:#fff;box-shadow:0 2px 5px rgba(0,0,0,0.3);"></div>
<div class="c" style="left:867px;top:671.5px;width:49px;height:32px;background:#b9cdff;color:#1f2fee;font-weight:bold;font-size:13px;padding-top:2px;box-sizing:border-box;">지도</div>
<div class="c" style="left:918px;top:671.5px;width:70px;height:32px;color:#8c8c8c;font-size:13px;padding-top:2px;box-sizing:border-box;">스카이뷰</div>
<div class="c" style="left:980px;top:671.5px;width:70px;height:32px;color:#8c8c8c;font-size:13px;padding-top:2px;box-sizing:border-box;">지형</div>
<div class="c" style="left:1035.3px;top:671.5px;width:70px;height:32px;color:#8c8c8c;font-size:13px;padding-top:2px;box-sizing:border-box;">지적도</div>
<div class="c" style="left:1091.4px;top:671.5px;width:70px;height:32px;color:#8c8c8c;font-size:13px;padding-top:2px;box-sizing:border-box;">교통</div>
<svg class="abs" style="left:782px;top:726px;" width="450" height="46" viewBox="782 726 450 46">
<circle cx="805.5" cy="746.8" r="13.0" fill="#c7ced8"/><path d="M795.1,754.6 L797.0,762.3 L803.0,759.6 Z" fill="#c7ced8"/><g transform="translate(805.5,746.8) rotate(-45) scale(0.756)" fill="none" stroke="#fff" stroke-width="1.32" stroke-linejoin="miter"><rect x="-13.6" y="-1.5" width="14.4" height="3" rx="1.5"/><path d="M0.9,6.4 L9.1,6.4 L9.1,-6.4 L7,-4.6 L5,-6.8 L3,-4.6 L0.9,-6.5 Z" fill="#c7ced8"/></g>
<circle cx="910.4" cy="746.8" r="13.0" fill="#8db0ff"/><path d="M900.0,754.6 L901.9,762.3 L907.9,759.6 Z" fill="#8db0ff"/><g transform="translate(910.4,746.8) rotate(-45) scale(0.756)" fill="none" stroke="#fff" stroke-width="1.32" stroke-linejoin="miter"><rect x="-13.6" y="-1.5" width="14.4" height="3" rx="1.5"/><path d="M0.9,6.4 L9.1,6.4 L9.1,-6.4 L7,-4.6 L5,-6.8 L3,-4.6 L0.9,-6.5 Z" fill="#8db0ff"/></g>
<circle cx="1015.6" cy="746.8" r="13.0" fill="#3f7df6"/><path d="M1005.2,754.6 L1007.1,762.3 L1013.1,759.6 Z" fill="#3f7df6"/><g transform="translate(1015.6,746.8) rotate(-45) scale(0.756)" fill="none" stroke="#fff" stroke-width="1.32" stroke-linejoin="miter"><rect x="-13.6" y="-1.5" width="14.4" height="3" rx="1.5"/><path d="M0.9,6.4 L9.1,6.4 L9.1,-6.4 L7,-4.6 L5,-6.8 L3,-4.6 L0.9,-6.5 Z" fill="#3f7df6"/></g>
<circle cx="1120.3" cy="746.8" r="13.0" fill="#1f33ff"/><path d="M1109.9,754.6 L1111.8,762.3 L1117.8,759.6 Z" fill="#1f33ff"/><g transform="translate(1120.3,746.8) rotate(-45) scale(0.756)" fill="none" stroke="#fff" stroke-width="1.32" stroke-linejoin="miter"><rect x="-13.6" y="-1.5" width="14.4" height="3" rx="1.5"/><path d="M0.9,6.4 L9.1,6.4 L9.1,-6.4 L7,-4.6 L5,-6.8 L3,-4.6 L0.9,-6.5 Z" fill="#1f33ff"/></g>
</svg>
<div class="c lg" style="left:824.5px;top:741.3px;height:20px;justify-content:flex-start;">100세대<svg width="8" height="14" viewBox="0 0 8 14" style="margin-left:4px;"><path d="M4,0.5 V13 M1,9.2 L4,13.2 L7,9.2" fill="none" stroke="#111" stroke-width="1.5"/></svg></div>
<div class="c lg" style="left:929px;top:741.3px;height:20px;justify-content:flex-start;">500세대<svg width="8" height="14" viewBox="0 0 8 14" style="margin-left:4px;"><path d="M4,0.5 V13 M1,9.2 L4,13.2 L7,9.2" fill="none" stroke="#111" stroke-width="1.5"/></svg></div>
<div class="c lg" style="left:1034px;top:741.3px;height:20px;justify-content:flex-start;">1,000세대<svg width="8" height="14" viewBox="0 0 8 14" style="margin-left:4px;"><path d="M4,0.5 V13 M1,9.2 L4,13.2 L7,9.2" fill="none" stroke="#111" stroke-width="1.5"/></svg></div>
<div class="c lg" style="left:1139.5px;top:741.3px;height:20px;justify-content:flex-start;">1,000세대<svg width="8" height="14" viewBox="0 0 8 14" style="margin-left:4px;"><path d="M4,13.5 V1 M1,4.8 L4,0.8 L7,4.8" fill="none" stroke="#111" stroke-width="1.5"/></svg></div>
<div class="abs" style="left:793.5px;top:779px;width:430.5px;height:37px;background:#595959;"></div>
<div class="c th" style="left:793.5px;top:779px;width:119.70000000000005px;height:37px;">위치</div>
<div class="c th" style="left:913.2px;top:779px;width:138.29999999999995px;height:37px;">단지명 –</div>
<div class="c th" style="left:1051.5px;top:779px;width:94.79999999999995px;height:37px;">입주년월 ∨</div>
<div class="c th" style="left:1146.3px;top:779px;width:77.70000000000005px;height:37px;">총세대수 –</div>
<div class="vs" style="left:912.7px;top:779px;height:37px;background:#8a8a8a;"></div>
<div class="vs" style="left:912.7px;top:816px;height:82px;"></div>
<div class="vs" style="left:1051.0px;top:779px;height:37px;background:#8a8a8a;"></div>
<div class="vs" style="left:1051.0px;top:816px;height:82px;"></div>
<div class="vs" style="left:1145.8px;top:779px;height:37px;background:#8a8a8a;"></div>
<div class="vs" style="left:1145.8px;top:816px;height:82px;"></div>
<div class="abs" style="left:793.5px;top:850.5px;width:430.5px;height:1px;background:#e4e4e4;"></div>
<div class="c td" style="left:794.5px;top:818px;height:34px;justify-content:flex-start;letter-spacing:-0.35px;">서울 중랑구 중…</div>
<div class="c td" style="left:913.2px;top:818px;width:138.29999999999995px;height:34px;font-weight:normal;font-size:14.1px;">리버센SK뷰롯데캐슬</div>
<div class="c td" style="left:1051.5px;top:818px;width:94.79999999999995px;height:34px;">2025년 11월</div>
<div class="c td" style="left:1146.3px;top:818px;width:80.70000000000005px;height:34px;">1,055세대</div>
<div class="c td" style="left:793.5px;top:857px;width:119.70000000000005px;height:34px;">서울 중랑구</div>
<div class="c td" style="left:1051.5px;top:857px;width:94.79999999999995px;height:34px;">총 세대수</div>
<div class="c td" style="left:1146.3px;top:857px;width:80.70000000000005px;height:34px;">1,055세대</div>
<div class="abs" style="left:794px;top:851.3px;width:440px;height:47.4px;box-sizing:border-box;border:6.4px solid #ff2a00;"></div>
</body>
</html>
